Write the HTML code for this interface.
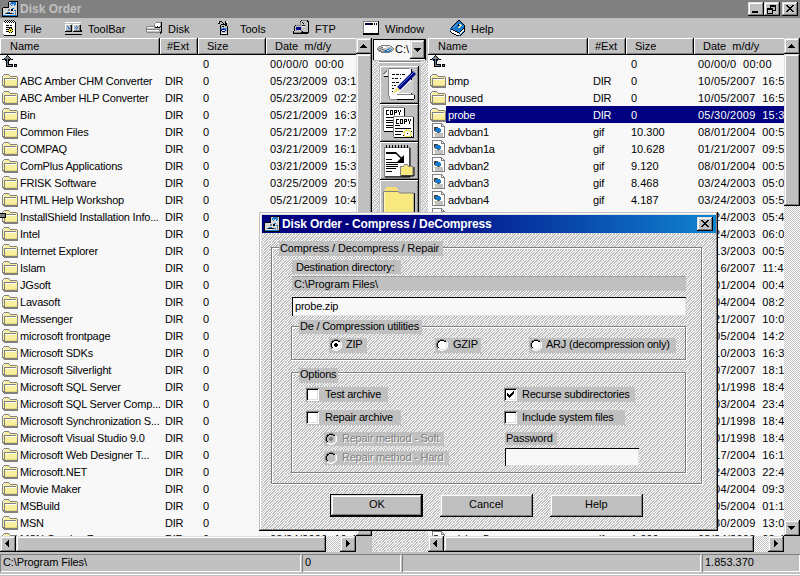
<!DOCTYPE html><html><head><meta charset='utf-8'><style>
*{box-sizing:border-box}
html,body{margin:0;padding:0}
body{width:800px;height:576px;overflow:hidden;position:relative;background:#c0c0c0;font-family:"Liberation Sans",sans-serif;font-size:11px;color:#000}
.a{position:absolute}
.t{position:absolute;white-space:pre;line-height:13px;height:13px}
.rb{box-shadow:inset -1px -1px #000,inset 1px 1px #fff,inset -2px -2px #808080}
.rb2{box-shadow:inset -1px -1px #000,inset 1px 1px #dfdfdf,inset -2px -2px #808080,inset 2px 2px #fff}
.sk{box-shadow:inset 1px 1px #808080,inset -1px -1px #fff}
</style></head><body><svg width="0" height="0" style="position:absolute" shape-rendering="crispEdges"><defs><g id="i-up"><rect x="7" y="0" width="1" height="1" fill="#000000"/><rect x="6" y="1" width="1" height="1" fill="#000000"/><rect x="7" y="1" width="1" height="1" fill="#808080"/><rect x="8" y="1" width="1" height="1" fill="#000000"/><rect x="5" y="2" width="1" height="1" fill="#1878d0"/><rect x="6" y="2" width="3" height="1" fill="#808080"/><rect x="9" y="2" width="1" height="1" fill="#000000"/><rect x="4" y="3" width="1" height="1" fill="#000000"/><rect x="5" y="3" width="5" height="1" fill="#808080"/><rect x="10" y="3" width="1" height="1" fill="#000000"/><rect x="2" y="4" width="2" height="1" fill="#000000"/><rect x="4" y="4" width="1" height="1" fill="#1878d0"/><rect x="5" y="4" width="2" height="1" fill="#000000"/><rect x="7" y="4" width="1" height="1" fill="#808080"/><rect x="8" y="4" width="2" height="1" fill="#000000"/><rect x="10" y="4" width="1" height="1" fill="#1878d0"/><rect x="11" y="4" width="2" height="1" fill="#000000"/><rect x="5" y="5" width="2" height="1" fill="#000000"/><rect x="7" y="5" width="1" height="1" fill="#808080"/><rect x="8" y="5" width="2" height="1" fill="#000000"/><rect x="6" y="6" width="1" height="1" fill="#000000"/><rect x="7" y="6" width="1" height="1" fill="#808080"/><rect x="8" y="6" width="1" height="1" fill="#000000"/><rect x="6" y="7" width="1" height="1" fill="#000000"/><rect x="7" y="7" width="1" height="1" fill="#1878d0"/><rect x="8" y="7" width="1" height="1" fill="#000000"/><rect x="6" y="8" width="1" height="1" fill="#000000"/><rect x="7" y="8" width="1" height="1" fill="#808080"/><rect x="8" y="8" width="1" height="1" fill="#000000"/><rect x="6" y="9" width="1" height="1" fill="#000000"/><rect x="7" y="9" width="1" height="1" fill="#808080"/><rect x="8" y="9" width="5" height="1" fill="#000000"/><rect x="14" y="9" width="3" height="1" fill="#000000"/><rect x="6" y="10" width="1" height="1" fill="#000000"/><rect x="7" y="10" width="4" height="1" fill="#808080"/><rect x="11" y="10" width="1" height="1" fill="#1878d0"/><rect x="12" y="10" width="1" height="1" fill="#000000"/><rect x="14" y="10" width="1" height="1" fill="#000000"/><rect x="15" y="10" width="1" height="1" fill="#808080"/><rect x="16" y="10" width="1" height="1" fill="#000000"/><rect x="6" y="11" width="7" height="1" fill="#000000"/><rect x="14" y="11" width="3" height="1" fill="#000000"/></g><g id="i-dir"><rect x="2" y="0" width="5" height="1" fill="#808080"/><rect x="1" y="1" width="1" height="1" fill="#808080"/><rect x="2" y="1" width="1" height="1" fill="#ffffff"/><rect x="3" y="1" width="4" height="1" fill="#f8f0a0"/><rect x="7" y="1" width="1" height="1" fill="#808080"/><rect x="0" y="2" width="1" height="1" fill="#808080"/><rect x="1" y="2" width="1" height="1" fill="#ffffff"/><rect x="2" y="2" width="6" height="1" fill="#f8f0a0"/><rect x="8" y="2" width="7" height="1" fill="#808080"/><rect x="0" y="3" width="1" height="1" fill="#808080"/><rect x="1" y="3" width="1" height="1" fill="#ffffff"/><rect x="2" y="3" width="13" height="1" fill="#f8f0a0"/><rect x="15" y="3" width="1" height="1" fill="#808080"/><rect x="0" y="4" width="1" height="1" fill="#808080"/><rect x="1" y="4" width="1" height="1" fill="#f8f0a0"/><rect x="2" y="4" width="12" height="1" fill="#808080"/><rect x="14" y="4" width="1" height="1" fill="#f8f0a0"/><rect x="15" y="4" width="1" height="1" fill="#808080"/><rect x="0" y="5" width="1" height="1" fill="#808080"/><rect x="1" y="5" width="1" height="1" fill="#f8f0a0"/><rect x="2" y="5" width="1" height="1" fill="#808080"/><rect x="3" y="5" width="11" height="1" fill="#ffffff"/><rect x="14" y="5" width="1" height="1" fill="#f8f0a0"/><rect x="15" y="5" width="1" height="1" fill="#808080"/><rect x="0" y="6" width="1" height="1" fill="#808080"/><rect x="1" y="6" width="1" height="1" fill="#f8f0a0"/><rect x="2" y="6" width="1" height="1" fill="#808080"/><rect x="3" y="6" width="12" height="1" fill="#f8f0a0"/><rect x="15" y="6" width="1" height="1" fill="#808080"/><rect x="0" y="7" width="1" height="1" fill="#808080"/><rect x="1" y="7" width="1" height="1" fill="#f8f0a0"/><rect x="2" y="7" width="1" height="1" fill="#808080"/><rect x="3" y="7" width="12" height="1" fill="#f8f0a0"/><rect x="15" y="7" width="1" height="1" fill="#808080"/><rect x="0" y="8" width="1" height="1" fill="#808080"/><rect x="1" y="8" width="1" height="1" fill="#f8f0a0"/><rect x="2" y="8" width="1" height="1" fill="#808080"/><rect x="3" y="8" width="12" height="1" fill="#f8f0a0"/><rect x="15" y="8" width="1" height="1" fill="#808080"/><rect x="0" y="9" width="1" height="1" fill="#808080"/><rect x="1" y="9" width="1" height="1" fill="#f8f0a0"/><rect x="2" y="9" width="1" height="1" fill="#808080"/><rect x="3" y="9" width="12" height="1" fill="#f8f0a0"/><rect x="15" y="9" width="1" height="1" fill="#808080"/><rect x="0" y="10" width="1" height="1" fill="#808080"/><rect x="1" y="10" width="1" height="1" fill="#f8f0a0"/><rect x="2" y="10" width="1" height="1" fill="#808080"/><rect x="3" y="10" width="11" height="1" fill="#f8f0a0"/><rect x="14" y="10" width="1" height="1" fill="#e8d878"/><rect x="15" y="10" width="1" height="1" fill="#808080"/><rect x="0" y="11" width="3" height="1" fill="#808080"/><rect x="3" y="11" width="12" height="1" fill="#e8d878"/><rect x="15" y="11" width="1" height="1" fill="#808080"/><rect x="1" y="12" width="15" height="1" fill="#808080"/><rect x="2" y="13" width="14" height="1" fill="#808080"/></g><g id="i-gif"><rect x="0" y="0" width="10" height="1" fill="#808080"/><rect x="0" y="1" width="1" height="1" fill="#808080"/><rect x="1" y="1" width="8" height="1" fill="#ffffff"/><rect x="9" y="1" width="2" height="1" fill="#808080"/><rect x="0" y="2" width="1" height="1" fill="#808080"/><rect x="1" y="2" width="8" height="1" fill="#ffffff"/><rect x="9" y="2" width="1" height="1" fill="#808080"/><rect x="10" y="2" width="1" height="1" fill="#ffffff"/><rect x="11" y="2" width="1" height="1" fill="#808080"/><rect x="0" y="3" width="1" height="1" fill="#808080"/><rect x="1" y="3" width="8" height="1" fill="#ffffff"/><rect x="9" y="3" width="4" height="1" fill="#808080"/><rect x="0" y="4" width="1" height="1" fill="#808080"/><rect x="1" y="4" width="1" height="1" fill="#ffffff"/><rect x="2" y="4" width="4" height="1" fill="#404040"/><rect x="6" y="4" width="6" height="1" fill="#ffffff"/><rect x="12" y="4" width="1" height="1" fill="#808080"/><rect x="0" y="5" width="1" height="1" fill="#808080"/><rect x="1" y="5" width="1" height="1" fill="#ffffff"/><rect x="2" y="5" width="2" height="1" fill="#404040"/><rect x="4" y="5" width="4" height="1" fill="#1878d0"/><rect x="8" y="5" width="4" height="1" fill="#ffffff"/><rect x="12" y="5" width="1" height="1" fill="#808080"/><rect x="0" y="6" width="1" height="1" fill="#808080"/><rect x="1" y="6" width="1" height="1" fill="#ffffff"/><rect x="2" y="6" width="1" height="1" fill="#404040"/><rect x="3" y="6" width="6" height="1" fill="#1878d0"/><rect x="9" y="6" width="3" height="1" fill="#ffffff"/><rect x="12" y="6" width="1" height="1" fill="#808080"/><rect x="0" y="7" width="1" height="1" fill="#808080"/><rect x="1" y="7" width="1" height="1" fill="#ffffff"/><rect x="2" y="7" width="1" height="1" fill="#404040"/><rect x="3" y="7" width="6" height="1" fill="#1878d0"/><rect x="9" y="7" width="3" height="1" fill="#ffffff"/><rect x="12" y="7" width="1" height="1" fill="#808080"/><rect x="0" y="8" width="1" height="1" fill="#808080"/><rect x="1" y="8" width="2" height="1" fill="#ffffff"/><rect x="3" y="8" width="1" height="1" fill="#808080"/><rect x="4" y="8" width="5" height="1" fill="#1878d0"/><rect x="9" y="8" width="3" height="1" fill="#ffffff"/><rect x="12" y="8" width="1" height="1" fill="#808080"/><rect x="0" y="9" width="1" height="1" fill="#808080"/><rect x="1" y="9" width="4" height="1" fill="#ffffff"/><rect x="5" y="9" width="1" height="1" fill="#808080"/><rect x="6" y="9" width="1" height="1" fill="#404040"/><rect x="7" y="9" width="1" height="1" fill="#808080"/><rect x="8" y="9" width="4" height="1" fill="#ffffff"/><rect x="12" y="9" width="1" height="1" fill="#808080"/><rect x="0" y="10" width="1" height="1" fill="#808080"/><rect x="1" y="10" width="1" height="1" fill="#ffffff"/><rect x="2" y="10" width="1" height="1" fill="#e8d878"/><rect x="3" y="10" width="8" height="1" fill="#c0c0c0"/><rect x="11" y="10" width="1" height="1" fill="#ffffff"/><rect x="12" y="10" width="1" height="1" fill="#808080"/><rect x="0" y="11" width="1" height="1" fill="#808080"/><rect x="1" y="11" width="2" height="1" fill="#ffffff"/><rect x="3" y="11" width="8" height="1" fill="#c0c0c0"/><rect x="11" y="11" width="1" height="1" fill="#ffffff"/><rect x="12" y="11" width="1" height="1" fill="#808080"/><rect x="0" y="12" width="1" height="1" fill="#808080"/><rect x="1" y="12" width="2" height="1" fill="#ffffff"/><rect x="3" y="12" width="1" height="1" fill="#c0c0c0"/><rect x="4" y="12" width="1" height="1" fill="#e8d878"/><rect x="5" y="12" width="6" height="1" fill="#c0c0c0"/><rect x="11" y="12" width="1" height="1" fill="#ffffff"/><rect x="12" y="12" width="1" height="1" fill="#808080"/><rect x="0" y="13" width="1" height="1" fill="#808080"/><rect x="1" y="13" width="2" height="1" fill="#ffffff"/><rect x="3" y="13" width="8" height="1" fill="#c0c0c0"/><rect x="11" y="13" width="1" height="1" fill="#ffffff"/><rect x="12" y="13" width="1" height="1" fill="#808080"/><rect x="0" y="14" width="13" height="1" fill="#808080"/></g><pattern id="hD" x="4" y="0" width="8" height="8" patternUnits="userSpaceOnUse"><rect width="8" height="8" fill="#c0c0c0"/><g fill="#fff"><rect x="1" y="0" width="1" height="1"/><rect x="2" y="0" width="1" height="1"/><rect x="4" y="0" width="1" height="1"/><rect x="7" y="0" width="1" height="1"/><rect x="0" y="1" width="1" height="1"/><rect x="3" y="1" width="1" height="1"/><rect x="6" y="1" width="1" height="1"/><rect x="0" y="2" width="1" height="1"/><rect x="3" y="2" width="1" height="1"/><rect x="5" y="2" width="1" height="1"/><rect x="1" y="3" width="1" height="1"/><rect x="2" y="3" width="1" height="1"/><rect x="4" y="3" width="1" height="1"/><rect x="7" y="3" width="1" height="1"/><rect x="0" y="4" width="1" height="1"/><rect x="3" y="4" width="1" height="1"/><rect x="6" y="4" width="1" height="1"/><rect x="2" y="5" width="1" height="1"/><rect x="5" y="5" width="1" height="1"/><rect x="7" y="5" width="1" height="1"/><rect x="1" y="6" width="1" height="1"/><rect x="4" y="6" width="1" height="1"/><rect x="6" y="6" width="1" height="1"/><rect x="0" y="7" width="1" height="1"/><rect x="3" y="7" width="1" height="1"/><rect x="5" y="7" width="1" height="1"/></g></pattern><pattern id="hM" x="2" y="4" width="8" height="8" patternUnits="userSpaceOnUse"><rect width="8" height="8" fill="#c0c0c0"/><g fill="#fff"><rect x="1" y="0" width="1" height="1"/><rect x="2" y="0" width="1" height="1"/><rect x="4" y="0" width="1" height="1"/><rect x="7" y="0" width="1" height="1"/><rect x="0" y="1" width="1" height="1"/><rect x="3" y="1" width="1" height="1"/><rect x="6" y="1" width="1" height="1"/><rect x="0" y="2" width="1" height="1"/><rect x="3" y="2" width="1" height="1"/><rect x="5" y="2" width="1" height="1"/><rect x="1" y="3" width="1" height="1"/><rect x="2" y="3" width="1" height="1"/><rect x="4" y="3" width="1" height="1"/><rect x="7" y="3" width="1" height="1"/><rect x="0" y="4" width="1" height="1"/><rect x="3" y="4" width="1" height="1"/><rect x="6" y="4" width="1" height="1"/><rect x="2" y="5" width="1" height="1"/><rect x="5" y="5" width="1" height="1"/><rect x="7" y="5" width="1" height="1"/><rect x="1" y="6" width="1" height="1"/><rect x="4" y="6" width="1" height="1"/><rect x="6" y="6" width="1" height="1"/><rect x="0" y="7" width="1" height="1"/><rect x="3" y="7" width="1" height="1"/><rect x="5" y="7" width="1" height="1"/></g></pattern><pattern id="ck" x="0" y="0" width="2" height="2" patternUnits="userSpaceOnUse"><rect width="2" height="2" fill="#c0c0c0"/><rect x="1" y="0" width="1" height="1" fill="#fff"/><rect x="0" y="1" width="1" height="1" fill="#fff"/></pattern></defs></svg>
<div class="a" style="left:0;top:0;width:800px;height:18px;background:#808080"></div>
<svg class="a" style="left:2px;top:1px;" width="16" height="16" shape-rendering="crispEdges"><rect x="7" y="0" width="9" height="1" fill="#000000"/><rect x="6" y="1" width="1" height="1" fill="#000000"/><rect x="7" y="1" width="2" height="1" fill="#d8d8d8"/><rect x="9" y="1" width="5" height="1" fill="#1878d0"/><rect x="14" y="1" width="1" height="1" fill="#d8d8d8"/><rect x="15" y="1" width="1" height="1" fill="#000000"/><rect x="6" y="2" width="1" height="1" fill="#000000"/><rect x="7" y="2" width="1" height="1" fill="#d8d8d8"/><rect x="8" y="2" width="6" height="1" fill="#1878d0"/><rect x="14" y="2" width="1" height="1" fill="#d8d8d8"/><rect x="15" y="2" width="1" height="1" fill="#000000"/><rect x="6" y="3" width="1" height="1" fill="#000000"/><rect x="7" y="3" width="1" height="1" fill="#d8d8d8"/><rect x="8" y="3" width="1" height="1" fill="#1878d0"/><rect x="9" y="3" width="1" height="1" fill="#d8d8d8"/><rect x="10" y="3" width="1" height="1" fill="#1878d0"/><rect x="11" y="3" width="1" height="1" fill="#d8d8d8"/><rect x="12" y="3" width="2" height="1" fill="#1878d0"/><rect x="14" y="3" width="1" height="1" fill="#d8d8d8"/><rect x="15" y="3" width="1" height="1" fill="#000000"/><rect x="6" y="4" width="1" height="1" fill="#000000"/><rect x="7" y="4" width="2" height="1" fill="#d8d8d8"/><rect x="9" y="4" width="1" height="1" fill="#1878d0"/><rect x="10" y="4" width="2" height="1" fill="#d8d8d8"/><rect x="12" y="4" width="1" height="1" fill="#1878d0"/><rect x="13" y="4" width="2" height="1" fill="#d8d8d8"/><rect x="15" y="4" width="1" height="1" fill="#000000"/><rect x="6" y="5" width="1" height="1" fill="#000000"/><rect x="7" y="5" width="8" height="1" fill="#d8d8d8"/><rect x="15" y="5" width="1" height="1" fill="#000000"/><rect x="1" y="6" width="6" height="1" fill="#000000"/><rect x="7" y="6" width="8" height="1" fill="#d8d8d8"/><rect x="15" y="6" width="1" height="1" fill="#000000"/><rect x="0" y="7" width="1" height="1" fill="#000000"/><rect x="1" y="7" width="9" height="1" fill="#d8d8d8"/><rect x="10" y="7" width="2" height="1" fill="#1878d0"/><rect x="12" y="7" width="3" height="1" fill="#d8d8d8"/><rect x="15" y="7" width="1" height="1" fill="#000000"/><rect x="0" y="8" width="1" height="1" fill="#000000"/><rect x="1" y="8" width="5" height="1" fill="#d8d8d8"/><rect x="6" y="8" width="2" height="1" fill="#808080"/><rect x="8" y="8" width="1" height="1" fill="#d8d8d8"/><rect x="9" y="8" width="2" height="1" fill="#000000"/><rect x="11" y="8" width="4" height="1" fill="#d8d8d8"/><rect x="15" y="8" width="1" height="1" fill="#000000"/><rect x="0" y="9" width="1" height="1" fill="#000000"/><rect x="1" y="9" width="5" height="1" fill="#d8d8d8"/><rect x="6" y="9" width="2" height="1" fill="#808080"/><rect x="8" y="9" width="1" height="1" fill="#d8d8d8"/><rect x="9" y="9" width="2" height="1" fill="#000000"/><rect x="11" y="9" width="1" height="1" fill="#d8d8d8"/><rect x="12" y="9" width="2" height="1" fill="#1878d0"/><rect x="14" y="9" width="1" height="1" fill="#d8d8d8"/><rect x="15" y="9" width="1" height="1" fill="#000000"/><rect x="0" y="10" width="1" height="1" fill="#000000"/><rect x="1" y="10" width="12" height="1" fill="#d8d8d8"/><rect x="13" y="10" width="1" height="1" fill="#808080"/><rect x="14" y="10" width="1" height="1" fill="#d8d8d8"/><rect x="15" y="10" width="1" height="1" fill="#000000"/><rect x="0" y="11" width="1" height="1" fill="#000000"/><rect x="1" y="11" width="4" height="1" fill="#d8d8d8"/><rect x="5" y="11" width="3" height="1" fill="#1878d0"/><rect x="8" y="11" width="5" height="1" fill="#d8d8d8"/><rect x="13" y="11" width="1" height="1" fill="#808080"/><rect x="14" y="11" width="1" height="1" fill="#d8d8d8"/><rect x="15" y="11" width="1" height="1" fill="#000000"/><rect x="0" y="12" width="1" height="1" fill="#000000"/><rect x="1" y="12" width="2" height="1" fill="#d8d8d8"/><rect x="3" y="12" width="1" height="1" fill="#1878d0"/><rect x="4" y="12" width="6" height="1" fill="#000000"/><rect x="10" y="12" width="2" height="1" fill="#1878d0"/><rect x="12" y="12" width="1" height="1" fill="#d8d8d8"/><rect x="13" y="12" width="1" height="1" fill="#808080"/><rect x="14" y="12" width="1" height="1" fill="#d8d8d8"/><rect x="15" y="12" width="1" height="1" fill="#000000"/><rect x="0" y="13" width="1" height="1" fill="#000000"/><rect x="1" y="13" width="3" height="1" fill="#d8d8d8"/><rect x="4" y="13" width="4" height="1" fill="#ffffff"/><rect x="8" y="13" width="5" height="1" fill="#d8d8d8"/><rect x="13" y="13" width="1" height="1" fill="#808080"/><rect x="14" y="13" width="1" height="1" fill="#d8d8d8"/><rect x="15" y="13" width="1" height="1" fill="#000000"/><rect x="0" y="14" width="1" height="1" fill="#000000"/><rect x="1" y="14" width="14" height="1" fill="#1878d0"/><rect x="15" y="14" width="1" height="1" fill="#000000"/><rect x="0" y="15" width="16" height="1" fill="#000000"/></svg>
<div class="t" style="left:20px;top:2px;font-weight:bold;font-size:12px;line-height:15px;height:15px;color:#c0c0c0">Disk Order</div>
<div class="a rb2" style="left:748px;top:2px;width:16px;height:14px;background:#c0c0c0;"></div>
<div class="a rb2" style="left:764px;top:2px;width:16px;height:14px;background:#c0c0c0;"></div>
<div class="a rb2" style="left:782px;top:2px;width:16px;height:14px;background:#c0c0c0;"></div>
<div class="a" style="left:752px;top:11px;width:6px;height:2px;background:#000"></div>
<svg class="a" style="left:764px;top:2px" width="16" height="14" shape-rendering="crispEdges"><g fill="#000"><rect x="6" y="3" width="6" height="2"/><rect x="6" y="3" width="1" height="3"/><rect x="11" y="3" width="1" height="6"/><rect x="9" y="8" width="3" height="1"/><rect x="3" y="6" width="6" height="2"/><rect x="3" y="6" width="1" height="6"/><rect x="8" y="6" width="1" height="6"/><rect x="3" y="11" width="6" height="1"/></g></svg>
<svg class="a" style="left:782px;top:2px" width="16" height="14" shape-rendering="crispEdges"><path d="M4 3h2v1h1v1h2v-1h1v-1h2v1h-1v1h-1v1h-1v1h1v1h1v1h1v1h-2v-1h-1v-1h-2v1h-1v1h-2v-1h1v-1h1v-1h1v-1h-1v-1h-1v-1h-1z" fill="#000"/></svg>
<div class="t" style="left:24px;top:23px;">File</div>
<div class="t" style="left:88px;top:23px;">ToolBar</div>
<div class="t" style="left:168px;top:23px;">Disk</div>
<div class="t" style="left:240px;top:23px;">Tools</div>
<div class="t" style="left:315px;top:23px;">FTP</div>
<div class="t" style="left:385px;top:23px;">Window</div>
<div class="t" style="left:471px;top:23px;">Help</div>
<svg class="a" style="left:3px;top:20px;" width="14" height="16" shape-rendering="crispEdges"><rect x="2" y="0" width="1" height="1" fill="#000000"/><rect x="4" y="0" width="1" height="1" fill="#000000"/><rect x="6" y="0" width="1" height="1" fill="#000000"/><rect x="8" y="0" width="1" height="1" fill="#000000"/><rect x="10" y="0" width="1" height="1" fill="#000000"/><rect x="1" y="1" width="1" height="1" fill="#000000"/><rect x="2" y="1" width="1" height="1" fill="#ffffff"/><rect x="3" y="1" width="1" height="1" fill="#000000"/><rect x="4" y="1" width="1" height="1" fill="#ffffff"/><rect x="5" y="1" width="1" height="1" fill="#000000"/><rect x="6" y="1" width="1" height="1" fill="#ffffff"/><rect x="7" y="1" width="1" height="1" fill="#000000"/><rect x="8" y="1" width="1" height="1" fill="#ffffff"/><rect x="9" y="1" width="1" height="1" fill="#000000"/><rect x="10" y="1" width="1" height="1" fill="#ffffff"/><rect x="11" y="1" width="1" height="1" fill="#000000"/><rect x="0" y="2" width="2" height="1" fill="#ffffff"/><rect x="2" y="2" width="1" height="1" fill="#000000"/><rect x="3" y="2" width="1" height="1" fill="#ffffff"/><rect x="4" y="2" width="1" height="1" fill="#000000"/><rect x="5" y="2" width="1" height="1" fill="#ffffff"/><rect x="6" y="2" width="1" height="1" fill="#000000"/><rect x="7" y="2" width="1" height="1" fill="#ffffff"/><rect x="8" y="2" width="1" height="1" fill="#000000"/><rect x="9" y="2" width="1" height="1" fill="#ffffff"/><rect x="10" y="2" width="1" height="1" fill="#000000"/><rect x="11" y="2" width="1" height="1" fill="#ffffff"/><rect x="12" y="2" width="1" height="1" fill="#000000"/><rect x="0" y="3" width="12" height="1" fill="#ffffff"/><rect x="12" y="3" width="1" height="1" fill="#000000"/><rect x="0" y="4" width="12" height="1" fill="#ffffff"/><rect x="12" y="4" width="1" height="1" fill="#000000"/><rect x="0" y="5" width="3" height="1" fill="#ffffff"/><rect x="3" y="5" width="3" height="1" fill="#000000"/><rect x="6" y="5" width="1" height="1" fill="#ffffff"/><rect x="7" y="5" width="2" height="1" fill="#000000"/><rect x="9" y="5" width="3" height="1" fill="#ffffff"/><rect x="12" y="5" width="1" height="1" fill="#000000"/><rect x="0" y="6" width="12" height="1" fill="#ffffff"/><rect x="12" y="6" width="1" height="1" fill="#000000"/><rect x="0" y="7" width="3" height="1" fill="#ffffff"/><rect x="3" y="7" width="6" height="1" fill="#000000"/><rect x="9" y="7" width="3" height="1" fill="#ffffff"/><rect x="12" y="7" width="1" height="1" fill="#000000"/><rect x="0" y="8" width="6" height="1" fill="#ffffff"/><rect x="6" y="8" width="1" height="1" fill="#000000"/><rect x="7" y="8" width="1" height="1" fill="#f0e040"/><rect x="8" y="8" width="1" height="1" fill="#000000"/><rect x="9" y="8" width="3" height="1" fill="#ffffff"/><rect x="12" y="8" width="1" height="1" fill="#000000"/><rect x="0" y="9" width="3" height="1" fill="#ffffff"/><rect x="3" y="9" width="3" height="1" fill="#000000"/><rect x="6" y="9" width="3" height="1" fill="#f0e040"/><rect x="9" y="9" width="1" height="1" fill="#000000"/><rect x="10" y="9" width="2" height="1" fill="#ffffff"/><rect x="12" y="9" width="1" height="1" fill="#000000"/><rect x="0" y="10" width="5" height="1" fill="#ffffff"/><rect x="5" y="10" width="2" height="1" fill="#f0e040"/><rect x="7" y="10" width="1" height="1" fill="#000000"/><rect x="8" y="10" width="2" height="1" fill="#f0e040"/><rect x="10" y="10" width="2" height="1" fill="#ffffff"/><rect x="12" y="10" width="1" height="1" fill="#000000"/><rect x="0" y="11" width="3" height="1" fill="#ffffff"/><rect x="3" y="11" width="3" height="1" fill="#000000"/><rect x="6" y="11" width="3" height="1" fill="#f0e040"/><rect x="9" y="11" width="1" height="1" fill="#000000"/><rect x="10" y="11" width="2" height="1" fill="#ffffff"/><rect x="12" y="11" width="1" height="1" fill="#000000"/><rect x="0" y="12" width="6" height="1" fill="#ffffff"/><rect x="6" y="12" width="1" height="1" fill="#000000"/><rect x="7" y="12" width="1" height="1" fill="#f0e040"/><rect x="8" y="12" width="1" height="1" fill="#000000"/><rect x="9" y="12" width="3" height="1" fill="#ffffff"/><rect x="12" y="12" width="1" height="1" fill="#000000"/><rect x="0" y="13" width="12" height="1" fill="#ffffff"/><rect x="12" y="13" width="1" height="1" fill="#000000"/><rect x="0" y="14" width="1" height="1" fill="#808080"/><rect x="1" y="14" width="11" height="1" fill="#ffffff"/><rect x="12" y="14" width="1" height="1" fill="#000000"/><rect x="1" y="15" width="12" height="1" fill="#000000"/></svg>
<svg class="a" style="left:65px;top:22px;" width="17" height="13" shape-rendering="crispEdges"><rect x="0" y="0" width="16" height="1" fill="#ffffff"/><rect x="0" y="2" width="6" height="1" fill="#ffffff"/><rect x="6" y="2" width="1" height="1" fill="#c0c0c0"/><rect x="8" y="2" width="7" height="1" fill="#ffffff"/><rect x="15" y="2" width="1" height="1" fill="#c0c0c0"/><rect x="0" y="3" width="1" height="1" fill="#ffffff"/><rect x="1" y="3" width="4" height="1" fill="#c0c0c0"/><rect x="5" y="3" width="1" height="1" fill="#808080"/><rect x="6" y="3" width="1" height="1" fill="#000000"/><rect x="8" y="3" width="1" height="1" fill="#ffffff"/><rect x="9" y="3" width="5" height="1" fill="#c0c0c0"/><rect x="14" y="3" width="1" height="1" fill="#808080"/><rect x="15" y="3" width="1" height="1" fill="#000000"/><rect x="0" y="4" width="1" height="1" fill="#ffffff"/><rect x="1" y="4" width="1" height="1" fill="#c0c0c0"/><rect x="2" y="4" width="1" height="1" fill="#1878d0"/><rect x="3" y="4" width="2" height="1" fill="#c0c0c0"/><rect x="5" y="4" width="1" height="1" fill="#808080"/><rect x="6" y="4" width="1" height="1" fill="#000000"/><rect x="8" y="4" width="1" height="1" fill="#ffffff"/><rect x="9" y="4" width="2" height="1" fill="#c0c0c0"/><rect x="11" y="4" width="1" height="1" fill="#1878d0"/><rect x="12" y="4" width="2" height="1" fill="#c0c0c0"/><rect x="14" y="4" width="1" height="1" fill="#808080"/><rect x="15" y="4" width="1" height="1" fill="#000000"/><rect x="0" y="5" width="1" height="1" fill="#ffffff"/><rect x="1" y="5" width="2" height="1" fill="#c0c0c0"/><rect x="3" y="5" width="1" height="1" fill="#1878d0"/><rect x="4" y="5" width="1" height="1" fill="#c0c0c0"/><rect x="5" y="5" width="1" height="1" fill="#808080"/><rect x="6" y="5" width="1" height="1" fill="#000000"/><rect x="8" y="5" width="1" height="1" fill="#ffffff"/><rect x="9" y="5" width="1" height="1" fill="#c0c0c0"/><rect x="10" y="5" width="1" height="1" fill="#1878d0"/><rect x="11" y="5" width="1" height="1" fill="#c0c0c0"/><rect x="12" y="5" width="1" height="1" fill="#1878d0"/><rect x="13" y="5" width="1" height="1" fill="#c0c0c0"/><rect x="14" y="5" width="1" height="1" fill="#808080"/><rect x="15" y="5" width="1" height="1" fill="#000000"/><rect x="0" y="6" width="1" height="1" fill="#ffffff"/><rect x="1" y="6" width="2" height="1" fill="#c0c0c0"/><rect x="3" y="6" width="2" height="1" fill="#1878d0"/><rect x="5" y="6" width="1" height="1" fill="#808080"/><rect x="6" y="6" width="1" height="1" fill="#000000"/><rect x="8" y="6" width="1" height="1" fill="#ffffff"/><rect x="9" y="6" width="2" height="1" fill="#c0c0c0"/><rect x="11" y="6" width="1" height="1" fill="#1878d0"/><rect x="12" y="6" width="2" height="1" fill="#c0c0c0"/><rect x="14" y="6" width="1" height="1" fill="#808080"/><rect x="15" y="6" width="1" height="1" fill="#000000"/><rect x="0" y="7" width="1" height="1" fill="#ffffff"/><rect x="1" y="7" width="4" height="1" fill="#c0c0c0"/><rect x="5" y="7" width="1" height="1" fill="#808080"/><rect x="6" y="7" width="1" height="1" fill="#000000"/><rect x="8" y="7" width="1" height="1" fill="#ffffff"/><rect x="9" y="7" width="5" height="1" fill="#c0c0c0"/><rect x="14" y="7" width="1" height="1" fill="#808080"/><rect x="15" y="7" width="1" height="1" fill="#000000"/><rect x="0" y="8" width="1" height="1" fill="#ffffff"/><rect x="1" y="8" width="5" height="1" fill="#808080"/><rect x="6" y="8" width="1" height="1" fill="#000000"/><rect x="8" y="8" width="1" height="1" fill="#ffffff"/><rect x="9" y="8" width="6" height="1" fill="#808080"/><rect x="15" y="8" width="2" height="1" fill="#000000"/><rect x="0" y="9" width="7" height="1" fill="#000000"/><rect x="8" y="9" width="9" height="1" fill="#000000"/><rect x="0" y="12" width="17" height="1" fill="#000000"/></svg>
<svg class="a" style="left:146px;top:22px;" width="17" height="12" shape-rendering="crispEdges"><rect x="8" y="0" width="1" height="1" fill="#ffffff"/><rect x="9" y="0" width="6" height="1" fill="#808080"/><rect x="15" y="0" width="1" height="1" fill="#000000"/><rect x="8" y="1" width="1" height="1" fill="#808080"/><rect x="9" y="1" width="5" height="1" fill="#ffffff"/><rect x="14" y="1" width="1" height="1" fill="#c0c0c0"/><rect x="15" y="1" width="1" height="1" fill="#000000"/><rect x="8" y="2" width="1" height="1" fill="#808080"/><rect x="9" y="2" width="5" height="1" fill="#ffffff"/><rect x="14" y="2" width="1" height="1" fill="#c0c0c0"/><rect x="15" y="2" width="1" height="1" fill="#000000"/><rect x="8" y="3" width="1" height="1" fill="#808080"/><rect x="9" y="3" width="5" height="1" fill="#ffffff"/><rect x="14" y="3" width="1" height="1" fill="#c0c0c0"/><rect x="15" y="3" width="1" height="1" fill="#000000"/><rect x="1" y="4" width="8" height="1" fill="#808080"/><rect x="9" y="4" width="1" height="1" fill="#c0c0c0"/><rect x="10" y="4" width="1" height="1" fill="#ffffff"/><rect x="11" y="4" width="1" height="1" fill="#000000"/><rect x="12" y="4" width="1" height="1" fill="#ffffff"/><rect x="13" y="4" width="1" height="1" fill="#c0c0c0"/><rect x="14" y="4" width="2" height="1" fill="#000000"/><rect x="0" y="5" width="1" height="1" fill="#808080"/><rect x="1" y="5" width="7" height="1" fill="#ffffff"/><rect x="8" y="5" width="1" height="1" fill="#808080"/><rect x="9" y="5" width="5" height="1" fill="#000000"/><rect x="14" y="5" width="1" height="1" fill="#c0c0c0"/><rect x="15" y="5" width="1" height="1" fill="#000000"/><rect x="0" y="6" width="1" height="1" fill="#808080"/><rect x="1" y="6" width="14" height="1" fill="#c0c0c0"/><rect x="15" y="6" width="1" height="1" fill="#000000"/><rect x="0" y="7" width="14" height="1" fill="#808080"/><rect x="14" y="7" width="1" height="1" fill="#c0c0c0"/><rect x="15" y="7" width="1" height="1" fill="#000000"/><rect x="0" y="8" width="1" height="1" fill="#808080"/><rect x="1" y="8" width="12" height="1" fill="#ffffff"/><rect x="13" y="8" width="1" height="1" fill="#808080"/><rect x="14" y="8" width="1" height="1" fill="#c0c0c0"/><rect x="15" y="8" width="1" height="1" fill="#000000"/><rect x="0" y="9" width="1" height="1" fill="#808080"/><rect x="1" y="9" width="13" height="1" fill="#c0c0c0"/><rect x="14" y="9" width="1" height="1" fill="#808080"/><rect x="15" y="9" width="1" height="1" fill="#000000"/><rect x="1" y="10" width="13" height="1" fill="#808080"/><rect x="14" y="10" width="2" height="1" fill="#000000"/><rect x="14" y="11" width="1" height="1" fill="#000000"/></svg>
<svg class="a" style="left:217px;top:21px;" width="13" height="14" shape-rendering="crispEdges"><rect x="1" y="0" width="1" height="1" fill="#ffffff"/><rect x="2" y="0" width="3" height="1" fill="#000000"/><rect x="8" y="0" width="1" height="1" fill="#000000"/><rect x="10" y="0" width="1" height="1" fill="#ffffff"/><rect x="2" y="1" width="1" height="1" fill="#000000"/><rect x="5" y="1" width="1" height="1" fill="#000000"/><rect x="8" y="1" width="1" height="1" fill="#000000"/><rect x="10" y="1" width="1" height="1" fill="#ffffff"/><rect x="1" y="2" width="2" height="1" fill="#000000"/><rect x="6" y="2" width="1" height="1" fill="#000000"/><rect x="8" y="2" width="2" height="1" fill="#000000"/><rect x="4" y="3" width="6" height="1" fill="#000000"/><rect x="3" y="4" width="1" height="1" fill="#000000"/><rect x="4" y="4" width="4" height="1" fill="#c0c0c0"/><rect x="8" y="4" width="2" height="1" fill="#000000"/><rect x="3" y="5" width="1" height="1" fill="#000000"/><rect x="4" y="5" width="1" height="1" fill="#c0c0c0"/><rect x="5" y="5" width="2" height="1" fill="#000000"/><rect x="7" y="5" width="3" height="1" fill="#c0c0c0"/><rect x="10" y="5" width="1" height="1" fill="#000000"/><rect x="3" y="6" width="1" height="1" fill="#000000"/><rect x="4" y="6" width="6" height="1" fill="#c0c0c0"/><rect x="10" y="6" width="1" height="1" fill="#000000"/><rect x="3" y="7" width="1" height="1" fill="#000000"/><rect x="4" y="7" width="1" height="1" fill="#1878d0"/><rect x="5" y="7" width="1" height="1" fill="#60a0e0"/><rect x="6" y="7" width="1" height="1" fill="#1878d0"/><rect x="7" y="7" width="1" height="1" fill="#60a0e0"/><rect x="8" y="7" width="1" height="1" fill="#1878d0"/><rect x="9" y="7" width="1" height="1" fill="#60a0e0"/><rect x="10" y="7" width="1" height="1" fill="#000000"/><rect x="3" y="8" width="1" height="1" fill="#000000"/><rect x="4" y="8" width="1" height="1" fill="#1878d0"/><rect x="5" y="8" width="3" height="1" fill="#000080"/><rect x="8" y="8" width="1" height="1" fill="#1878d0"/><rect x="9" y="8" width="1" height="1" fill="#c0c0c0"/><rect x="10" y="8" width="1" height="1" fill="#000000"/><rect x="3" y="9" width="1" height="1" fill="#000000"/><rect x="4" y="9" width="1" height="1" fill="#000080"/><rect x="5" y="9" width="3" height="1" fill="#ffffff"/><rect x="8" y="9" width="1" height="1" fill="#000080"/><rect x="9" y="9" width="1" height="1" fill="#c0c0c0"/><rect x="10" y="9" width="1" height="1" fill="#000000"/><rect x="3" y="10" width="1" height="1" fill="#000000"/><rect x="4" y="10" width="1" height="1" fill="#c0c0c0"/><rect x="5" y="10" width="3" height="1" fill="#000080"/><rect x="8" y="10" width="2" height="1" fill="#c0c0c0"/><rect x="10" y="10" width="1" height="1" fill="#000000"/><rect x="3" y="11" width="1" height="1" fill="#000000"/><rect x="4" y="11" width="6" height="1" fill="#c0c0c0"/><rect x="10" y="11" width="1" height="1" fill="#000000"/><rect x="3" y="12" width="1" height="1" fill="#000000"/><rect x="4" y="12" width="6" height="1" fill="#ffffff"/><rect x="10" y="12" width="1" height="1" fill="#000000"/><rect x="3" y="13" width="8" height="1" fill="#000000"/></svg>
<svg class="a" style="left:293px;top:20px;" width="16" height="14" shape-rendering="crispEdges"><rect x="8" y="0" width="1" height="1" fill="#000000"/><rect x="9" y="0" width="5" height="1" fill="#808080"/><rect x="14" y="0" width="1" height="1" fill="#000000"/><rect x="7" y="1" width="1" height="1" fill="#000000"/><rect x="8" y="1" width="6" height="1" fill="#c0c0c0"/><rect x="14" y="1" width="2" height="1" fill="#000000"/><rect x="7" y="2" width="1" height="1" fill="#808080"/><rect x="8" y="2" width="1" height="1" fill="#c0c0c0"/><rect x="9" y="2" width="1" height="1" fill="#000000"/><rect x="10" y="2" width="5" height="1" fill="#c0c0c0"/><rect x="15" y="2" width="1" height="1" fill="#000000"/><rect x="7" y="3" width="1" height="1" fill="#808080"/><rect x="8" y="3" width="2" height="1" fill="#c0c0c0"/><rect x="10" y="3" width="1" height="1" fill="#000000"/><rect x="11" y="3" width="4" height="1" fill="#c0c0c0"/><rect x="15" y="3" width="1" height="1" fill="#000000"/><rect x="7" y="4" width="1" height="1" fill="#808080"/><rect x="8" y="4" width="7" height="1" fill="#c0c0c0"/><rect x="15" y="4" width="1" height="1" fill="#000000"/><rect x="2" y="5" width="1" height="1" fill="#000000"/><rect x="3" y="5" width="5" height="1" fill="#808080"/><rect x="8" y="5" width="1" height="1" fill="#c0c0c0"/><rect x="9" y="5" width="3" height="1" fill="#000000"/><rect x="12" y="5" width="3" height="1" fill="#c0c0c0"/><rect x="15" y="5" width="1" height="1" fill="#000000"/><rect x="1" y="6" width="1" height="1" fill="#000000"/><rect x="2" y="6" width="7" height="1" fill="#c0c0c0"/><rect x="9" y="6" width="3" height="1" fill="#ffffff"/><rect x="12" y="6" width="3" height="1" fill="#c0c0c0"/><rect x="15" y="6" width="1" height="1" fill="#000000"/><rect x="1" y="7" width="1" height="1" fill="#000000"/><rect x="2" y="7" width="1" height="1" fill="#c0c0c0"/><rect x="3" y="7" width="5" height="1" fill="#000080"/><rect x="8" y="7" width="7" height="1" fill="#c0c0c0"/><rect x="15" y="7" width="1" height="1" fill="#000000"/><rect x="1" y="8" width="1" height="1" fill="#000000"/><rect x="2" y="8" width="1" height="1" fill="#c0c0c0"/><rect x="3" y="8" width="5" height="1" fill="#000080"/><rect x="8" y="8" width="7" height="1" fill="#c0c0c0"/><rect x="15" y="8" width="1" height="1" fill="#000000"/><rect x="1" y="9" width="1" height="1" fill="#000000"/><rect x="2" y="9" width="1" height="1" fill="#c0c0c0"/><rect x="3" y="9" width="5" height="1" fill="#000080"/><rect x="8" y="9" width="7" height="1" fill="#c0c0c0"/><rect x="15" y="9" width="1" height="1" fill="#000000"/><rect x="1" y="10" width="1" height="1" fill="#000000"/><rect x="2" y="10" width="6" height="1" fill="#c0c0c0"/><rect x="8" y="10" width="1" height="1" fill="#808080"/><rect x="9" y="10" width="6" height="1" fill="#c0c0c0"/><rect x="15" y="10" width="1" height="1" fill="#000000"/><rect x="0" y="11" width="1" height="1" fill="#000000"/><rect x="1" y="11" width="7" height="1" fill="#c0c0c0"/><rect x="8" y="11" width="1" height="1" fill="#808080"/><rect x="9" y="11" width="1" height="1" fill="#000000"/><rect x="10" y="11" width="5" height="1" fill="#c0c0c0"/><rect x="15" y="11" width="1" height="1" fill="#000000"/><rect x="0" y="12" width="1" height="1" fill="#000000"/><rect x="1" y="12" width="7" height="1" fill="#808080"/><rect x="8" y="12" width="8" height="1" fill="#000000"/><rect x="0" y="13" width="15" height="1" fill="#000000"/></svg>
<svg class="a" style="left:363px;top:21px;" width="16" height="14" shape-rendering="crispEdges"><rect x="0" y="0" width="15" height="1" fill="#808080"/><rect x="15" y="0" width="1" height="1" fill="#000000"/><rect x="0" y="1" width="1" height="1" fill="#808080"/><rect x="1" y="1" width="14" height="1" fill="#ffffff"/><rect x="15" y="1" width="1" height="1" fill="#000000"/><rect x="0" y="2" width="1" height="1" fill="#808080"/><rect x="1" y="2" width="1" height="1" fill="#ffffff"/><rect x="2" y="2" width="2" height="1" fill="#000000"/><rect x="4" y="2" width="3" height="1" fill="#000080"/><rect x="7" y="2" width="3" height="1" fill="#000000"/><rect x="10" y="2" width="1" height="1" fill="#ffffff"/><rect x="11" y="2" width="1" height="1" fill="#000000"/><rect x="12" y="2" width="1" height="1" fill="#ffffff"/><rect x="13" y="2" width="1" height="1" fill="#000000"/><rect x="14" y="2" width="1" height="1" fill="#ffffff"/><rect x="15" y="2" width="1" height="1" fill="#000000"/><rect x="0" y="3" width="1" height="1" fill="#808080"/><rect x="1" y="3" width="1" height="1" fill="#ffffff"/><rect x="2" y="3" width="2" height="1" fill="#000000"/><rect x="4" y="3" width="3" height="1" fill="#000080"/><rect x="7" y="3" width="3" height="1" fill="#000000"/><rect x="10" y="3" width="1" height="1" fill="#ffffff"/><rect x="11" y="3" width="1" height="1" fill="#000000"/><rect x="12" y="3" width="1" height="1" fill="#ffffff"/><rect x="13" y="3" width="1" height="1" fill="#000000"/><rect x="14" y="3" width="1" height="1" fill="#ffffff"/><rect x="15" y="3" width="1" height="1" fill="#000000"/><rect x="0" y="4" width="1" height="1" fill="#808080"/><rect x="1" y="4" width="14" height="1" fill="#ffffff"/><rect x="15" y="4" width="1" height="1" fill="#000000"/><rect x="0" y="5" width="1" height="1" fill="#808080"/><rect x="1" y="5" width="14" height="1" fill="#ffffff"/><rect x="15" y="5" width="1" height="1" fill="#000000"/><rect x="0" y="6" width="1" height="1" fill="#808080"/><rect x="1" y="6" width="14" height="1" fill="#ffffff"/><rect x="15" y="6" width="1" height="1" fill="#000000"/><rect x="0" y="7" width="1" height="1" fill="#808080"/><rect x="1" y="7" width="14" height="1" fill="#ffffff"/><rect x="15" y="7" width="1" height="1" fill="#000000"/><rect x="0" y="8" width="1" height="1" fill="#808080"/><rect x="1" y="8" width="14" height="1" fill="#ffffff"/><rect x="15" y="8" width="1" height="1" fill="#000000"/><rect x="0" y="9" width="1" height="1" fill="#808080"/><rect x="1" y="9" width="14" height="1" fill="#ffffff"/><rect x="15" y="9" width="1" height="1" fill="#000000"/><rect x="0" y="10" width="1" height="1" fill="#808080"/><rect x="1" y="10" width="14" height="1" fill="#ffffff"/><rect x="15" y="10" width="1" height="1" fill="#000000"/><rect x="0" y="11" width="1" height="1" fill="#808080"/><rect x="1" y="11" width="14" height="1" fill="#ffffff"/><rect x="15" y="11" width="1" height="1" fill="#000000"/><rect x="0" y="12" width="16" height="1" fill="#000000"/><rect x="0" y="13" width="16" height="1" fill="#000000"/></svg>
<svg class="a" style="left:450px;top:20px;" width="16" height="16" shape-rendering="crispEdges"><rect x="8" y="0" width="2" height="1" fill="#000000"/><rect x="7" y="1" width="1" height="1" fill="#000000"/><rect x="8" y="1" width="2" height="1" fill="#1878d0"/><rect x="10" y="1" width="1" height="1" fill="#000000"/><rect x="6" y="2" width="1" height="1" fill="#000000"/><rect x="7" y="2" width="4" height="1" fill="#1878d0"/><rect x="11" y="2" width="1" height="1" fill="#000000"/><rect x="5" y="3" width="1" height="1" fill="#000000"/><rect x="6" y="3" width="6" height="1" fill="#1878d0"/><rect x="12" y="3" width="1" height="1" fill="#000000"/><rect x="4" y="4" width="1" height="1" fill="#000000"/><rect x="5" y="4" width="1" height="1" fill="#1878d0"/><rect x="6" y="4" width="1" height="1" fill="#60a0e0"/><rect x="7" y="4" width="1" height="1" fill="#1878d0"/><rect x="8" y="4" width="1" height="1" fill="#000000"/><rect x="9" y="4" width="2" height="1" fill="#f8f0a0"/><rect x="11" y="4" width="2" height="1" fill="#1878d0"/><rect x="13" y="4" width="1" height="1" fill="#000000"/><rect x="3" y="5" width="1" height="1" fill="#000000"/><rect x="4" y="5" width="1" height="1" fill="#1878d0"/><rect x="5" y="5" width="1" height="1" fill="#60a0e0"/><rect x="6" y="5" width="2" height="1" fill="#1878d0"/><rect x="8" y="5" width="1" height="1" fill="#000000"/><rect x="9" y="5" width="1" height="1" fill="#1878d0"/><rect x="10" y="5" width="2" height="1" fill="#f8f0a0"/><rect x="12" y="5" width="2" height="1" fill="#1878d0"/><rect x="14" y="5" width="1" height="1" fill="#000000"/><rect x="2" y="6" width="1" height="1" fill="#000000"/><rect x="3" y="6" width="1" height="1" fill="#1878d0"/><rect x="4" y="6" width="1" height="1" fill="#60a0e0"/><rect x="5" y="6" width="4" height="1" fill="#1878d0"/><rect x="9" y="6" width="2" height="1" fill="#f8f0a0"/><rect x="11" y="6" width="3" height="1" fill="#1878d0"/><rect x="14" y="6" width="1" height="1" fill="#000000"/><rect x="1" y="7" width="1" height="1" fill="#000000"/><rect x="2" y="7" width="1" height="1" fill="#1878d0"/><rect x="3" y="7" width="1" height="1" fill="#60a0e0"/><rect x="4" y="7" width="4" height="1" fill="#1878d0"/><rect x="8" y="7" width="2" height="1" fill="#f8f0a0"/><rect x="10" y="7" width="4" height="1" fill="#1878d0"/><rect x="14" y="7" width="1" height="1" fill="#000000"/><rect x="0" y="8" width="13" height="1" fill="#1878d0"/><rect x="13" y="8" width="2" height="1" fill="#000000"/><rect x="0" y="9" width="1" height="1" fill="#1878d0"/><rect x="1" y="9" width="2" height="1" fill="#000000"/><rect x="3" y="9" width="9" height="1" fill="#1878d0"/><rect x="12" y="9" width="1" height="1" fill="#000000"/><rect x="13" y="9" width="1" height="1" fill="#ffffff"/><rect x="14" y="9" width="1" height="1" fill="#000000"/><rect x="0" y="10" width="1" height="1" fill="#1878d0"/><rect x="1" y="10" width="2" height="1" fill="#ffffff"/><rect x="3" y="10" width="2" height="1" fill="#000000"/><rect x="5" y="10" width="6" height="1" fill="#1878d0"/><rect x="11" y="10" width="1" height="1" fill="#000000"/><rect x="12" y="10" width="2" height="1" fill="#ffffff"/><rect x="14" y="10" width="1" height="1" fill="#000000"/><rect x="0" y="11" width="1" height="1" fill="#000000"/><rect x="1" y="11" width="4" height="1" fill="#ffffff"/><rect x="5" y="11" width="2" height="1" fill="#000000"/><rect x="7" y="11" width="3" height="1" fill="#1878d0"/><rect x="10" y="11" width="1" height="1" fill="#000000"/><rect x="11" y="11" width="2" height="1" fill="#ffffff"/><rect x="13" y="11" width="1" height="1" fill="#1878d0"/><rect x="14" y="11" width="1" height="1" fill="#000000"/><rect x="1" y="12" width="1" height="1" fill="#000000"/><rect x="2" y="12" width="5" height="1" fill="#ffffff"/><rect x="7" y="12" width="2" height="1" fill="#000000"/><rect x="9" y="12" width="1" height="1" fill="#1878d0"/><rect x="10" y="12" width="2" height="1" fill="#ffffff"/><rect x="12" y="12" width="1" height="1" fill="#1878d0"/><rect x="13" y="12" width="1" height="1" fill="#000000"/><rect x="2" y="13" width="2" height="1" fill="#000000"/><rect x="4" y="13" width="5" height="1" fill="#ffffff"/><rect x="9" y="13" width="1" height="1" fill="#000000"/><rect x="10" y="13" width="1" height="1" fill="#ffffff"/><rect x="11" y="13" width="1" height="1" fill="#1878d0"/><rect x="12" y="13" width="1" height="1" fill="#000000"/><rect x="4" y="14" width="2" height="1" fill="#000000"/><rect x="6" y="14" width="4" height="1" fill="#ffffff"/><rect x="10" y="14" width="1" height="1" fill="#1878d0"/><rect x="11" y="14" width="1" height="1" fill="#000000"/><rect x="6" y="15" width="3" height="1" fill="#000000"/><rect x="9" y="15" width="1" height="1" fill="#1878d0"/><rect x="10" y="15" width="1" height="1" fill="#000000"/></svg>
<div class="a rb" style="left:0px;top:38px;width:160px;height:17px;background:#c0c0c0"></div>
<div class="t" style="left:10px;top:40px;">Name</div>
<div class="a rb" style="left:160px;top:38px;width:38px;height:17px;background:#c0c0c0"></div>
<div class="t" style="left:167px;top:40px;">#Ext</div>
<div class="a rb" style="left:198px;top:38px;width:68px;height:17px;background:#c0c0c0"></div>
<div class="t" style="left:207px;top:40px;">Size</div>
<div class="a rb" style="left:266px;top:38px;width:100px;height:17px;background:#c0c0c0"></div>
<div class="t" style="left:275px;top:40px;">Date  m/d/y</div>
<div class="a" style="left:0px;top:55px;width:356px;height:481px;background:#f8f8f8;overflow:hidden">
<svg class="a" style="left:0;top:0px" width="17" height="12"><use href="#i-up"/></svg>
<div class="t" style="left:20px;top:3px;color:#000;letter-spacing:-0.2px"></div>
<div class="t" style="left:165px;top:3px;color:#000;letter-spacing:-0.2px"></div>
<div class="t" style="left:203px;top:3px;color:#000;letter-spacing:0px">0</div>
<div class="t" style="left:270px;top:3px;color:#000;letter-spacing:0.25px">00/00/0  00:00</div>
<svg class="a" style="left:2px;top:19px" width="16" height="14"><use href="#i-dir"/></svg>
<div class="t" style="left:20px;top:20px;color:#000;letter-spacing:-0.2px">ABC Amber CHM Converter</div>
<div class="t" style="left:165px;top:20px;color:#000;letter-spacing:-0.2px">DIR</div>
<div class="t" style="left:203px;top:20px;color:#000;letter-spacing:0px">0</div>
<div class="t" style="left:270px;top:20px;color:#000;letter-spacing:0.25px">05/23/2009  03:1</div>
<svg class="a" style="left:2px;top:36px" width="16" height="14"><use href="#i-dir"/></svg>
<div class="t" style="left:20px;top:37px;color:#000;letter-spacing:-0.2px">ABC Amber HLP Converter</div>
<div class="t" style="left:165px;top:37px;color:#000;letter-spacing:-0.2px">DIR</div>
<div class="t" style="left:203px;top:37px;color:#000;letter-spacing:0px">0</div>
<div class="t" style="left:270px;top:37px;color:#000;letter-spacing:0.25px">05/23/2009  02:2</div>
<svg class="a" style="left:2px;top:53px" width="16" height="14"><use href="#i-dir"/></svg>
<div class="t" style="left:20px;top:54px;color:#000;letter-spacing:-0.2px">Bin</div>
<div class="t" style="left:165px;top:54px;color:#000;letter-spacing:-0.2px">DIR</div>
<div class="t" style="left:203px;top:54px;color:#000;letter-spacing:0px">0</div>
<div class="t" style="left:270px;top:54px;color:#000;letter-spacing:0.25px">05/21/2009  16:3</div>
<svg class="a" style="left:2px;top:70px" width="16" height="14"><use href="#i-dir"/></svg>
<div class="t" style="left:20px;top:71px;color:#000;letter-spacing:-0.2px">Common Files</div>
<div class="t" style="left:165px;top:71px;color:#000;letter-spacing:-0.2px">DIR</div>
<div class="t" style="left:203px;top:71px;color:#000;letter-spacing:0px">0</div>
<div class="t" style="left:270px;top:71px;color:#000;letter-spacing:0.25px">05/21/2009  17:2</div>
<svg class="a" style="left:2px;top:87px" width="16" height="14"><use href="#i-dir"/></svg>
<div class="t" style="left:20px;top:88px;color:#000;letter-spacing:-0.2px">COMPAQ</div>
<div class="t" style="left:165px;top:88px;color:#000;letter-spacing:-0.2px">DIR</div>
<div class="t" style="left:203px;top:88px;color:#000;letter-spacing:0px">0</div>
<div class="t" style="left:270px;top:88px;color:#000;letter-spacing:0.25px">03/21/2009  16:1</div>
<svg class="a" style="left:2px;top:104px" width="16" height="14"><use href="#i-dir"/></svg>
<div class="t" style="left:20px;top:105px;color:#000;letter-spacing:-0.2px">ComPlus Applications</div>
<div class="t" style="left:165px;top:105px;color:#000;letter-spacing:-0.2px">DIR</div>
<div class="t" style="left:203px;top:105px;color:#000;letter-spacing:0px">0</div>
<div class="t" style="left:270px;top:105px;color:#000;letter-spacing:0.25px">03/21/2009  15:3</div>
<svg class="a" style="left:2px;top:121px" width="16" height="14"><use href="#i-dir"/></svg>
<div class="t" style="left:20px;top:122px;color:#000;letter-spacing:-0.2px">FRISK Software</div>
<div class="t" style="left:165px;top:122px;color:#000;letter-spacing:-0.2px">DIR</div>
<div class="t" style="left:203px;top:122px;color:#000;letter-spacing:0px">0</div>
<div class="t" style="left:270px;top:122px;color:#000;letter-spacing:0.25px">03/25/2009  20:5</div>
<svg class="a" style="left:2px;top:138px" width="16" height="14"><use href="#i-dir"/></svg>
<div class="t" style="left:20px;top:139px;color:#000;letter-spacing:-0.2px">HTML Help Workshop</div>
<div class="t" style="left:165px;top:139px;color:#000;letter-spacing:-0.2px">DIR</div>
<div class="t" style="left:203px;top:139px;color:#000;letter-spacing:0px">0</div>
<div class="t" style="left:270px;top:139px;color:#000;letter-spacing:0.25px">05/21/2009  10:4</div>
<svg class="a" style="left:2px;top:155px" width="16" height="14"><use href="#i-dir"/></svg>
<div class="a" style="left:0;top:158px;width:6px;height:5px;background:#808080;box-shadow:inset 0 1px #000,inset -1px 0 #000,inset 0 -1px #000"></div>
<div class="t" style="left:20px;top:156px;color:#000;letter-spacing:-0.2px">InstallShield Installation Info...</div>
<div class="t" style="left:165px;top:156px;color:#000;letter-spacing:-0.2px">DIR</div>
<div class="t" style="left:203px;top:156px;color:#000;letter-spacing:0px">0</div>
<div class="t" style="left:270px;top:156px;color:#000;letter-spacing:0.25px">05/21/2009  10:4</div>
<svg class="a" style="left:2px;top:172px" width="16" height="14"><use href="#i-dir"/></svg>
<div class="t" style="left:20px;top:173px;color:#000;letter-spacing:-0.2px">Intel</div>
<div class="t" style="left:165px;top:173px;color:#000;letter-spacing:-0.2px">DIR</div>
<div class="t" style="left:203px;top:173px;color:#000;letter-spacing:0px">0</div>
<div class="t" style="left:270px;top:173px;color:#000;letter-spacing:0.25px">03/24/2009  10:4</div>
<svg class="a" style="left:2px;top:189px" width="16" height="14"><use href="#i-dir"/></svg>
<div class="t" style="left:20px;top:190px;color:#000;letter-spacing:-0.2px">Internet Explorer</div>
<div class="t" style="left:165px;top:190px;color:#000;letter-spacing:-0.2px">DIR</div>
<div class="t" style="left:203px;top:190px;color:#000;letter-spacing:0px">0</div>
<div class="t" style="left:270px;top:190px;color:#000;letter-spacing:0.25px">03/24/2009  10:4</div>
<svg class="a" style="left:2px;top:206px" width="16" height="14"><use href="#i-dir"/></svg>
<div class="t" style="left:20px;top:207px;color:#000;letter-spacing:-0.2px">Islam</div>
<div class="t" style="left:165px;top:207px;color:#000;letter-spacing:-0.2px">DIR</div>
<div class="t" style="left:203px;top:207px;color:#000;letter-spacing:0px">0</div>
<div class="t" style="left:270px;top:207px;color:#000;letter-spacing:0.25px">03/24/2009  10:4</div>
<svg class="a" style="left:2px;top:223px" width="16" height="14"><use href="#i-dir"/></svg>
<div class="t" style="left:20px;top:224px;color:#000;letter-spacing:-0.2px">JGsoft</div>
<div class="t" style="left:165px;top:224px;color:#000;letter-spacing:-0.2px">DIR</div>
<div class="t" style="left:203px;top:224px;color:#000;letter-spacing:0px">0</div>
<div class="t" style="left:270px;top:224px;color:#000;letter-spacing:0.25px">03/24/2009  10:4</div>
<svg class="a" style="left:2px;top:240px" width="16" height="14"><use href="#i-dir"/></svg>
<div class="t" style="left:20px;top:241px;color:#000;letter-spacing:-0.2px">Lavasoft</div>
<div class="t" style="left:165px;top:241px;color:#000;letter-spacing:-0.2px">DIR</div>
<div class="t" style="left:203px;top:241px;color:#000;letter-spacing:0px">0</div>
<div class="t" style="left:270px;top:241px;color:#000;letter-spacing:0.25px">03/24/2009  10:4</div>
<svg class="a" style="left:2px;top:257px" width="16" height="14"><use href="#i-dir"/></svg>
<div class="t" style="left:20px;top:258px;color:#000;letter-spacing:-0.2px">Messenger</div>
<div class="t" style="left:165px;top:258px;color:#000;letter-spacing:-0.2px">DIR</div>
<div class="t" style="left:203px;top:258px;color:#000;letter-spacing:0px">0</div>
<div class="t" style="left:270px;top:258px;color:#000;letter-spacing:0.25px">03/24/2009  10:4</div>
<svg class="a" style="left:2px;top:274px" width="16" height="14"><use href="#i-dir"/></svg>
<div class="t" style="left:20px;top:275px;color:#000;letter-spacing:-0.2px">microsoft frontpage</div>
<div class="t" style="left:165px;top:275px;color:#000;letter-spacing:-0.2px">DIR</div>
<div class="t" style="left:203px;top:275px;color:#000;letter-spacing:0px">0</div>
<div class="t" style="left:270px;top:275px;color:#000;letter-spacing:0.25px">03/24/2009  10:4</div>
<svg class="a" style="left:2px;top:291px" width="16" height="14"><use href="#i-dir"/></svg>
<div class="t" style="left:20px;top:292px;color:#000;letter-spacing:-0.2px">Microsoft SDKs</div>
<div class="t" style="left:165px;top:292px;color:#000;letter-spacing:-0.2px">DIR</div>
<div class="t" style="left:203px;top:292px;color:#000;letter-spacing:0px">0</div>
<div class="t" style="left:270px;top:292px;color:#000;letter-spacing:0.25px">03/24/2009  10:4</div>
<svg class="a" style="left:2px;top:308px" width="16" height="14"><use href="#i-dir"/></svg>
<div class="t" style="left:20px;top:309px;color:#000;letter-spacing:-0.2px">Microsoft Silverlight</div>
<div class="t" style="left:165px;top:309px;color:#000;letter-spacing:-0.2px">DIR</div>
<div class="t" style="left:203px;top:309px;color:#000;letter-spacing:0px">0</div>
<div class="t" style="left:270px;top:309px;color:#000;letter-spacing:0.25px">03/24/2009  10:4</div>
<svg class="a" style="left:2px;top:325px" width="16" height="14"><use href="#i-dir"/></svg>
<div class="t" style="left:20px;top:326px;color:#000;letter-spacing:-0.2px">Microsoft SQL Server</div>
<div class="t" style="left:165px;top:326px;color:#000;letter-spacing:-0.2px">DIR</div>
<div class="t" style="left:203px;top:326px;color:#000;letter-spacing:0px">0</div>
<div class="t" style="left:270px;top:326px;color:#000;letter-spacing:0.25px">03/24/2009  10:4</div>
<svg class="a" style="left:2px;top:342px" width="16" height="14"><use href="#i-dir"/></svg>
<div class="t" style="left:20px;top:343px;color:#000;letter-spacing:-0.2px">Microsoft SQL Server Comp...</div>
<div class="t" style="left:165px;top:343px;color:#000;letter-spacing:-0.2px">DIR</div>
<div class="t" style="left:203px;top:343px;color:#000;letter-spacing:0px">0</div>
<div class="t" style="left:270px;top:343px;color:#000;letter-spacing:0.25px">03/24/2009  10:4</div>
<svg class="a" style="left:2px;top:359px" width="16" height="14"><use href="#i-dir"/></svg>
<div class="t" style="left:20px;top:360px;color:#000;letter-spacing:-0.2px">Microsoft Synchronization S...</div>
<div class="t" style="left:165px;top:360px;color:#000;letter-spacing:-0.2px">DIR</div>
<div class="t" style="left:203px;top:360px;color:#000;letter-spacing:0px">0</div>
<div class="t" style="left:270px;top:360px;color:#000;letter-spacing:0.25px">03/24/2009  10:4</div>
<svg class="a" style="left:2px;top:376px" width="16" height="14"><use href="#i-dir"/></svg>
<div class="t" style="left:20px;top:377px;color:#000;letter-spacing:-0.2px">Microsoft Visual Studio 9.0</div>
<div class="t" style="left:165px;top:377px;color:#000;letter-spacing:-0.2px">DIR</div>
<div class="t" style="left:203px;top:377px;color:#000;letter-spacing:0px">0</div>
<div class="t" style="left:270px;top:377px;color:#000;letter-spacing:0.25px">03/24/2009  10:4</div>
<svg class="a" style="left:2px;top:393px" width="16" height="14"><use href="#i-dir"/></svg>
<div class="t" style="left:20px;top:394px;color:#000;letter-spacing:-0.2px">Microsoft Web Designer T...</div>
<div class="t" style="left:165px;top:394px;color:#000;letter-spacing:-0.2px">DIR</div>
<div class="t" style="left:203px;top:394px;color:#000;letter-spacing:0px">0</div>
<div class="t" style="left:270px;top:394px;color:#000;letter-spacing:0.25px">03/24/2009  10:4</div>
<svg class="a" style="left:2px;top:410px" width="16" height="14"><use href="#i-dir"/></svg>
<div class="t" style="left:20px;top:411px;color:#000;letter-spacing:-0.2px">Microsoft.NET</div>
<div class="t" style="left:165px;top:411px;color:#000;letter-spacing:-0.2px">DIR</div>
<div class="t" style="left:203px;top:411px;color:#000;letter-spacing:0px">0</div>
<div class="t" style="left:270px;top:411px;color:#000;letter-spacing:0.25px">03/24/2009  10:4</div>
<svg class="a" style="left:2px;top:427px" width="16" height="14"><use href="#i-dir"/></svg>
<div class="t" style="left:20px;top:428px;color:#000;letter-spacing:-0.2px">Movie Maker</div>
<div class="t" style="left:165px;top:428px;color:#000;letter-spacing:-0.2px">DIR</div>
<div class="t" style="left:203px;top:428px;color:#000;letter-spacing:0px">0</div>
<div class="t" style="left:270px;top:428px;color:#000;letter-spacing:0.25px">03/24/2009  10:4</div>
<svg class="a" style="left:2px;top:444px" width="16" height="14"><use href="#i-dir"/></svg>
<div class="t" style="left:20px;top:445px;color:#000;letter-spacing:-0.2px">MSBuild</div>
<div class="t" style="left:165px;top:445px;color:#000;letter-spacing:-0.2px">DIR</div>
<div class="t" style="left:203px;top:445px;color:#000;letter-spacing:0px">0</div>
<div class="t" style="left:270px;top:445px;color:#000;letter-spacing:0.25px">03/24/2009  10:4</div>
<svg class="a" style="left:2px;top:461px" width="16" height="14"><use href="#i-dir"/></svg>
<div class="t" style="left:20px;top:462px;color:#000;letter-spacing:-0.2px">MSN</div>
<div class="t" style="left:165px;top:462px;color:#000;letter-spacing:-0.2px">DIR</div>
<div class="t" style="left:203px;top:462px;color:#000;letter-spacing:0px">0</div>
<div class="t" style="left:270px;top:462px;color:#000;letter-spacing:0.25px">03/24/2009  10:4</div>
<svg class="a" style="left:2px;top:478px" width="16" height="14"><use href="#i-dir"/></svg>
<div class="t" style="left:20px;top:478px;color:#000;letter-spacing:-0.2px">MSN Gaming Zone</div>
<div class="t" style="left:165px;top:478px;color:#000;letter-spacing:-0.2px">DIR</div>
<div class="t" style="left:203px;top:478px;color:#000;letter-spacing:0px">0</div>
<div class="t" style="left:270px;top:478px;color:#000;letter-spacing:0.25px">03/24/2009  10:4</div>
</div>
<div class="a rb2" style="left:356px;top:38px;width:16px;height:16px;background:#c0c0c0;"></div>
<svg class="a" style="left:356px;top:38px" width="16" height="16" shape-rendering="crispEdges"><path d="M7 6h1v1h1v1h1v1h1v1h-7v-1h1v-1h1v-1h1z" fill="#000"/></svg>
<div class="a rb2" style="left:356px;top:54px;width:16px;height:482px;background:#c0c0c0;"></div>
<svg class="a" style="left:372px;top:38px" width="56" height="514" viewBox="372 38 56 514" shape-rendering="crispEdges"><rect x="372" y="38" width="56" height="514" fill="url(#hM)"/></svg>
<div class="a" style="left:372px;top:38px;width:56px;height:23px;background:#c0c0c0"></div>
<div class="a" style="left:373px;top:39px;width:53px;height:21px;background:#f8f8f8;box-shadow:inset 1px 1px #000,inset -1px 0 #000"></div>
<div class="a rb2" style="left:410px;top:40px;width:15px;height:19px;background:#c0c0c0;"></div>
<svg class="a" style="left:410px;top:40px" width="15" height="19" shape-rendering="crispEdges"><path d="M4 8h7v1h-1v1h-1v1h-1v1h-1v-1h-1v-1h-1v-1h-1z" fill="#000"/></svg>
<div class="t" style="left:395px;top:43px">C:\</div>
<svg class="a" style="left:377px;top:45px;" width="17" height="8" shape-rendering="crispEdges"><rect x="4" y="0" width="9" height="1" fill="#808080"/><rect x="2" y="1" width="2" height="1" fill="#808080"/><rect x="4" y="1" width="2" height="1" fill="#c0c0c0"/><rect x="6" y="1" width="3" height="1" fill="#ffffff"/><rect x="9" y="1" width="2" height="1" fill="#c0c0c0"/><rect x="11" y="1" width="2" height="1" fill="#ffffff"/><rect x="13" y="1" width="2" height="1" fill="#808080"/><rect x="1" y="2" width="1" height="1" fill="#808080"/><rect x="2" y="2" width="2" height="1" fill="#c0c0c0"/><rect x="4" y="2" width="2" height="1" fill="#808080"/><rect x="6" y="2" width="4" height="1" fill="#ffffff"/><rect x="10" y="2" width="5" height="1" fill="#c0c0c0"/><rect x="15" y="2" width="1" height="1" fill="#808080"/><rect x="0" y="3" width="1" height="1" fill="#808080"/><rect x="1" y="3" width="1" height="1" fill="#c0c0c0"/><rect x="2" y="3" width="2" height="1" fill="#808080"/><rect x="4" y="3" width="8" height="1" fill="#c0c0c0"/><rect x="12" y="3" width="1" height="1" fill="#1878d0"/><rect x="13" y="3" width="3" height="1" fill="#c0c0c0"/><rect x="16" y="3" width="1" height="1" fill="#808080"/><rect x="0" y="4" width="2" height="1" fill="#808080"/><rect x="2" y="4" width="2" height="1" fill="#c0c0c0"/><rect x="4" y="4" width="3" height="1" fill="#808080"/><rect x="7" y="4" width="3" height="1" fill="#c0c0c0"/><rect x="10" y="4" width="2" height="1" fill="#1878d0"/><rect x="12" y="4" width="2" height="1" fill="#c0c0c0"/><rect x="14" y="4" width="1" height="1" fill="#1878d0"/><rect x="15" y="4" width="1" height="1" fill="#c0c0c0"/><rect x="16" y="4" width="1" height="1" fill="#808080"/><rect x="1" y="5" width="3" height="1" fill="#808080"/><rect x="4" y="5" width="3" height="1" fill="#c0c0c0"/><rect x="7" y="5" width="1" height="1" fill="#808080"/><rect x="8" y="5" width="2" height="1" fill="#1878d0"/><rect x="10" y="5" width="2" height="1" fill="#c0c0c0"/><rect x="12" y="5" width="2" height="1" fill="#1878d0"/><rect x="14" y="5" width="1" height="1" fill="#c0c0c0"/><rect x="15" y="5" width="1" height="1" fill="#808080"/><rect x="2" y="6" width="6" height="1" fill="#808080"/><rect x="8" y="6" width="4" height="1" fill="#1878d0"/><rect x="12" y="6" width="3" height="1" fill="#808080"/><rect x="4" y="7" width="4" height="1" fill="#808080"/><rect x="8" y="7" width="1" height="1" fill="#1878d0"/><rect x="9" y="7" width="4" height="1" fill="#808080"/></svg>
<div class="a" style="left:379px;top:61px;width:42px;height:460px;background:#c0c0c0;box-shadow:inset 0 1px #808080,inset 0 2px #fff"></div>
<svg class="a" style="left:372px;top:61px" width="7" height="491" viewBox="372 61 7 491" shape-rendering="crispEdges"><rect x="372" y="61" width="7" height="491" fill="url(#hM)"/></svg>
<svg class="a" style="left:421px;top:61px" width="7" height="491" viewBox="421 61 7 491" shape-rendering="crispEdges"><rect x="421" y="61" width="7" height="491" fill="url(#hM)"/></svg>
<div class="a rb" style="left:380px;top:66px;width:39px;height:38px;background:#c0c0c0;"></div>
<div class="a rb" style="left:380px;top:104px;width:39px;height:38px;background:#c0c0c0;"></div>
<div class="a rb" style="left:380px;top:142px;width:39px;height:38px;background:#c0c0c0;"></div>
<div class="a rb" style="left:380px;top:180px;width:39px;height:38px;background:#c0c0c0;"></div>
<svg class="a" style="left:380px;top:66px" width="39" height="38" shape-rendering="crispEdges">
<path d="M4 6h1v-1h1v-1h3v7h-5z" fill="#e8e8e8"/><path d="M3 7h1v-1h1v-1h1v-1h1" stroke="#808080" fill="none"/><rect x="4" y="10" width="5" height="1" fill="#000"/>
<rect x="9" y="3" width="22" height="27" fill="#fff"/><rect x="8" y="3" width="1" height="27" fill="#808080"/><rect x="9" y="2" width="20" height="1" fill="#808080"/><rect x="31" y="3" width="1" height="25" fill="#000"/>
<rect x="10" y="30" width="7" height="3" fill="#fff"/><rect x="9" y="30" width="1" height="3" fill="#808080"/>
<rect x="17" y="28" width="17" height="5" fill="#fff"/><rect x="17" y="28" width="17" height="1" fill="#808080"/><rect x="17" y="33" width="17" height="1" fill="#000"/><rect x="34" y="29" width="1" height="4" fill="#000"/><rect x="10" y="33" width="7" height="1" fill="#808080"/>
<path d="M18 27L33 12V27z" fill="#d0d0d0"/>
<g fill="#000"><rect x="12" y="8" width="3" height="1"/><rect x="16" y="8" width="3" height="1"/><rect x="20" y="8" width="1" height="1"/><rect x="22" y="8" width="3" height="1"/>
<rect x="12" y="12" width="2" height="1"/><rect x="15" y="12" width="3" height="1"/><rect x="20" y="12" width="1" height="1"/>
<rect x="12" y="16" width="3" height="1"/><rect x="16" y="16" width="3" height="1"/>
<rect x="12" y="19" width="1" height="1"/><rect x="14" y="19" width="2" height="1"/>
<rect x="12" y="22" width="2" height="1"/><rect x="12" y="25" width="1" height="1"/></g>
</svg>
<svg class="a" style="left:380px;top:66px" width="39" height="38">
<path d="M17 21L33 5L36 8L20 24Z" fill="#000080"/>
<path d="M18.5 21.5L34 6" stroke="#3080e0" stroke-width="1"/>
<path d="M17 21L20 24L12 28Z" fill="#f0e080"/>
</svg>
<svg class="a" style="left:380px;top:104px" width="39" height="38" shape-rendering="crispEdges"><rect x="3" y="3" width="21" height="24" fill="#fff"/><rect x="3" y="3" width="21" height="1" fill="#808080"/><rect x="3" y="3" width="1" height="24" fill="#808080"/><rect x="24" y="4" width="1" height="24" fill="#000"/><rect x="4" y="27" width="21" height="1" fill="#000"/><g fill="#000"><rect x="6" y="6" width="1" height="1"/><rect x="7" y="6" width="1" height="1"/><rect x="8" y="6" width="1" height="1"/><rect x="6" y="7" width="1" height="1"/><rect x="6" y="8" width="1" height="1"/><rect x="6" y="9" width="1" height="1"/><rect x="6" y="10" width="1" height="1"/><rect x="7" y="10" width="1" height="1"/><rect x="8" y="10" width="1" height="1"/><rect x="10" y="6" width="1" height="1"/><rect x="11" y="6" width="1" height="1"/><rect x="12" y="6" width="1" height="1"/><rect x="10" y="7" width="1" height="1"/><rect x="12" y="7" width="1" height="1"/><rect x="10" y="8" width="1" height="1"/><rect x="12" y="8" width="1" height="1"/><rect x="10" y="9" width="1" height="1"/><rect x="12" y="9" width="1" height="1"/><rect x="10" y="10" width="1" height="1"/><rect x="11" y="10" width="1" height="1"/><rect x="12" y="10" width="1" height="1"/><rect x="14" y="6" width="1" height="1"/><rect x="15" y="6" width="1" height="1"/><rect x="16" y="6" width="1" height="1"/><rect x="14" y="7" width="1" height="1"/><rect x="16" y="7" width="1" height="1"/><rect x="14" y="8" width="1" height="1"/><rect x="15" y="8" width="1" height="1"/><rect x="16" y="8" width="1" height="1"/><rect x="14" y="9" width="1" height="1"/><rect x="14" y="10" width="1" height="1"/><rect x="18" y="6" width="1" height="1"/><rect x="20" y="6" width="1" height="1"/><rect x="18" y="7" width="1" height="1"/><rect x="20" y="7" width="1" height="1"/><rect x="19" y="8" width="1" height="1"/><rect x="19" y="9" width="1" height="1"/><rect x="19" y="10" width="1" height="1"/><rect x="6" y="13" width="9" height="1"/><rect x="6" y="16" width="9" height="1"/><rect x="6" y="18" width="9" height="1"/><rect x="6" y="21" width="9" height="1"/><rect x="6" y="23" width="9" height="1"/></g><rect x="13" y="12" width="20" height="21" fill="#fff"/><rect x="13" y="12" width="20" height="1" fill="#808080"/><rect x="13" y="12" width="1" height="21" fill="#808080"/><rect x="33" y="13" width="1" height="21" fill="#000"/><rect x="14" y="33" width="20" height="1" fill="#000"/><g fill="#000"><rect x="16" y="15" width="1" height="1"/><rect x="17" y="15" width="1" height="1"/><rect x="18" y="15" width="1" height="1"/><rect x="16" y="16" width="1" height="1"/><rect x="16" y="17" width="1" height="1"/><rect x="16" y="18" width="1" height="1"/><rect x="16" y="19" width="1" height="1"/><rect x="17" y="19" width="1" height="1"/><rect x="18" y="19" width="1" height="1"/><rect x="20" y="15" width="1" height="1"/><rect x="21" y="15" width="1" height="1"/><rect x="22" y="15" width="1" height="1"/><rect x="20" y="16" width="1" height="1"/><rect x="22" y="16" width="1" height="1"/><rect x="20" y="17" width="1" height="1"/><rect x="22" y="17" width="1" height="1"/><rect x="20" y="18" width="1" height="1"/><rect x="22" y="18" width="1" height="1"/><rect x="20" y="19" width="1" height="1"/><rect x="21" y="19" width="1" height="1"/><rect x="22" y="19" width="1" height="1"/><rect x="24" y="15" width="1" height="1"/><rect x="25" y="15" width="1" height="1"/><rect x="26" y="15" width="1" height="1"/><rect x="24" y="16" width="1" height="1"/><rect x="26" y="16" width="1" height="1"/><rect x="24" y="17" width="1" height="1"/><rect x="25" y="17" width="1" height="1"/><rect x="26" y="17" width="1" height="1"/><rect x="24" y="18" width="1" height="1"/><rect x="24" y="19" width="1" height="1"/><rect x="28" y="15" width="1" height="1"/><rect x="30" y="15" width="1" height="1"/><rect x="28" y="16" width="1" height="1"/><rect x="30" y="16" width="1" height="1"/><rect x="29" y="17" width="1" height="1"/><rect x="29" y="18" width="1" height="1"/><rect x="29" y="19" width="1" height="1"/><rect x="15" y="21" width="5" height="1"/><rect x="15" y="24" width="16" height="1"/><rect x="15" y="27" width="8" height="1"/><rect x="15" y="30" width="6" height="1"/></g><g fill="#f0e040"><rect x="25" y="26" width="5" height="1"/><rect x="24" y="27" width="1" height="5"/><rect x="30" y="27" width="1" height="5"/><rect x="25" y="32" width="5" height="1"/><rect x="26" y="25" width="1" height="1"/><rect x="28" y="25" width="1" height="1"/><rect x="23" y="28" width="1" height="1"/><rect x="31" y="30" width="1" height="1"/></g><g fill="#000"><rect x="27" y="29" width="1" height="1"/><rect x="31" y="27" width="1" height="1"/><rect x="23" y="31" width="1" height="1"/><rect x="31" y="32" width="1" height="1"/><rect x="25" y="33" width="1" height="1"/></g></svg>
<svg class="a" style="left:380px;top:142px" width="39" height="38">
<rect x="4.5" y="5.5" width="25" height="29" fill="#fff" stroke="#808080"/><path d="M30 6v29h-25" stroke="#000" fill="none"/>
<g fill="#000"><rect x="6" y="3" width="1" height="3"/><rect x="9" y="3" width="1" height="3"/><rect x="12" y="3" width="1" height="3"/><rect x="15" y="3" width="1" height="3"/><rect x="18" y="3" width="1" height="3"/><rect x="21" y="3" width="1" height="3"/><rect x="24" y="3" width="1" height="3"/><rect x="27" y="3" width="1" height="3"/>
<rect x="6" y="10" width="10" height="2"/><path d="M16 10l7 7h-2l-6-6z"/><path d="M24 13v8h-8z"/>
<rect x="6" y="17" width="6" height="1"/><rect x="6" y="20" width="12" height="1"/><rect x="6" y="22" width="12" height="1"/><rect x="6" y="24" width="12" height="1"/><rect x="6" y="26" width="10" height="1"/><rect x="6" y="29" width="6" height="1"/></g>
<path d="M20.5 24.5h3l1 -2h3l1 2h4.5v9h-12.5z" fill="#f8e880" stroke="#808080"/><path d="M34 25v9h-13" stroke="#000" fill="none"/>
</svg>
<svg class="a" style="left:380px;top:180px" width="39" height="38">
<path d="M4 11l3-4h9l3 4z" fill="#f8e070"/>
<path d="M3.5 11.5h15l1 1.5h14.5v20.5h-30.5z" fill="#f8e880" stroke="#808080"/>
<path d="M34.5 13v21.5h-30" stroke="#000" fill="none"/>
<path d="M4.5 12v21" stroke="#fff8c0"/>
</svg>
<div class="a rb" style="left:428px;top:38px;width:160px;height:17px;background:#c0c0c0"></div>
<div class="t" style="left:438px;top:40px;">Name</div>
<div class="a rb" style="left:588px;top:38px;width:38px;height:17px;background:#c0c0c0"></div>
<div class="t" style="left:595px;top:40px;">#Ext</div>
<div class="a rb" style="left:626px;top:38px;width:68px;height:17px;background:#c0c0c0"></div>
<div class="t" style="left:635px;top:40px;">Size</div>
<div class="a rb" style="left:694px;top:38px;width:100px;height:17px;background:#c0c0c0"></div>
<div class="t" style="left:703px;top:40px;">Date  m/d/y</div>
<div class="a" style="left:428px;top:55px;width:356px;height:481px;background:#f8f8f8;overflow:hidden">
<svg class="a" style="left:0;top:0px" width="17" height="12"><use href="#i-up"/></svg>
<div class="t" style="left:20px;top:3px;color:#000;letter-spacing:-0.2px"></div>
<div class="t" style="left:165px;top:3px;color:#000;letter-spacing:-0.2px"></div>
<div class="t" style="left:203px;top:3px;color:#000;letter-spacing:0px">0</div>
<div class="t" style="left:270px;top:3px;color:#000;letter-spacing:0.25px">00/00/0  00:00</div>
<svg class="a" style="left:2px;top:19px" width="16" height="14"><use href="#i-dir"/></svg>
<div class="t" style="left:20px;top:20px;color:#000;letter-spacing:-0.2px">bmp</div>
<div class="t" style="left:165px;top:20px;color:#000;letter-spacing:-0.2px">DIR</div>
<div class="t" style="left:203px;top:20px;color:#000;letter-spacing:0px">0</div>
<div class="t" style="left:270px;top:20px;color:#000;letter-spacing:0.25px">10/05/2007  16:5</div>
<svg class="a" style="left:2px;top:36px" width="16" height="14"><use href="#i-dir"/></svg>
<div class="t" style="left:20px;top:37px;color:#000;letter-spacing:-0.2px">noused</div>
<div class="t" style="left:165px;top:37px;color:#000;letter-spacing:-0.2px">DIR</div>
<div class="t" style="left:203px;top:37px;color:#000;letter-spacing:0px">0</div>
<div class="t" style="left:270px;top:37px;color:#000;letter-spacing:0.25px">10/05/2007  16:5</div>
<div class="a" style="left:18px;top:51px;width:338px;height:17px;background:#000080"></div>
<svg class="a" style="left:2px;top:53px" width="16" height="14"><use href="#i-dir"/></svg>
<div class="t" style="left:20px;top:54px;color:#fff;letter-spacing:-0.2px">probe</div>
<div class="t" style="left:165px;top:54px;color:#fff;letter-spacing:-0.2px">DIR</div>
<div class="t" style="left:203px;top:54px;color:#fff;letter-spacing:0px">0</div>
<div class="t" style="left:270px;top:54px;color:#fff;letter-spacing:0.25px">05/30/2009  15:3</div>
<svg class="a" style="left:4px;top:68px" width="14" height="16"><use href="#i-gif"/></svg>
<div class="t" style="left:20px;top:71px;color:#000;letter-spacing:-0.2px">advban1</div>
<div class="t" style="left:165px;top:71px;color:#000;letter-spacing:-0.2px">gif</div>
<div class="t" style="left:203px;top:71px;color:#000;letter-spacing:0px">10.300</div>
<div class="t" style="left:270px;top:71px;color:#000;letter-spacing:0.25px">08/01/2004  00:5</div>
<svg class="a" style="left:4px;top:85px" width="14" height="16"><use href="#i-gif"/></svg>
<div class="t" style="left:20px;top:88px;color:#000;letter-spacing:-0.2px">advban1a</div>
<div class="t" style="left:165px;top:88px;color:#000;letter-spacing:-0.2px">gif</div>
<div class="t" style="left:203px;top:88px;color:#000;letter-spacing:0px">10.628</div>
<div class="t" style="left:270px;top:88px;color:#000;letter-spacing:0.25px">01/21/2007  09:5</div>
<svg class="a" style="left:4px;top:102px" width="14" height="16"><use href="#i-gif"/></svg>
<div class="t" style="left:20px;top:105px;color:#000;letter-spacing:-0.2px">advban2</div>
<div class="t" style="left:165px;top:105px;color:#000;letter-spacing:-0.2px">gif</div>
<div class="t" style="left:203px;top:105px;color:#000;letter-spacing:0px">9.120</div>
<div class="t" style="left:270px;top:105px;color:#000;letter-spacing:0.25px">08/01/2004  00:5</div>
<svg class="a" style="left:4px;top:119px" width="14" height="16"><use href="#i-gif"/></svg>
<div class="t" style="left:20px;top:122px;color:#000;letter-spacing:-0.2px">advban3</div>
<div class="t" style="left:165px;top:122px;color:#000;letter-spacing:-0.2px">gif</div>
<div class="t" style="left:203px;top:122px;color:#000;letter-spacing:0px">8.468</div>
<div class="t" style="left:270px;top:122px;color:#000;letter-spacing:0.25px">03/24/2003  05:0</div>
<svg class="a" style="left:4px;top:136px" width="14" height="16"><use href="#i-gif"/></svg>
<div class="t" style="left:20px;top:139px;color:#000;letter-spacing:-0.2px">advban4</div>
<div class="t" style="left:165px;top:139px;color:#000;letter-spacing:-0.2px">gif</div>
<div class="t" style="left:203px;top:139px;color:#000;letter-spacing:0px">4.187</div>
<div class="t" style="left:270px;top:139px;color:#000;letter-spacing:0.25px">03/24/2003  05:5</div>
<svg class="a" style="left:4px;top:153px" width="14" height="16"><use href="#i-gif"/></svg>
<div class="t" style="left:20px;top:156px;color:#000;letter-spacing:-0.2px">advban5</div>
<div class="t" style="left:165px;top:156px;color:#000;letter-spacing:-0.2px">gif</div>
<div class="t" style="left:203px;top:156px;color:#000;letter-spacing:0px">1.000</div>
<div class="t" style="left:270px;top:156px;color:#000;letter-spacing:0.25px">03/24/2003  05:4</div>
<svg class="a" style="left:4px;top:170px" width="14" height="16"><use href="#i-gif"/></svg>
<div class="t" style="left:20px;top:173px;color:#000;letter-spacing:-0.2px">advban5</div>
<div class="t" style="left:165px;top:173px;color:#000;letter-spacing:-0.2px">gif</div>
<div class="t" style="left:203px;top:173px;color:#000;letter-spacing:0px">1.000</div>
<div class="t" style="left:270px;top:173px;color:#000;letter-spacing:0.25px">03/24/2003  06:0</div>
<svg class="a" style="left:4px;top:187px" width="14" height="16"><use href="#i-gif"/></svg>
<div class="t" style="left:20px;top:190px;color:#000;letter-spacing:-0.2px">advban5</div>
<div class="t" style="left:165px;top:190px;color:#000;letter-spacing:-0.2px">gif</div>
<div class="t" style="left:203px;top:190px;color:#000;letter-spacing:0px">1.000</div>
<div class="t" style="left:270px;top:190px;color:#000;letter-spacing:0.25px">02/13/2003  00:5</div>
<svg class="a" style="left:4px;top:204px" width="14" height="16"><use href="#i-gif"/></svg>
<div class="t" style="left:20px;top:207px;color:#000;letter-spacing:-0.2px">advban5</div>
<div class="t" style="left:165px;top:207px;color:#000;letter-spacing:-0.2px">gif</div>
<div class="t" style="left:203px;top:207px;color:#000;letter-spacing:0px">1.000</div>
<div class="t" style="left:270px;top:207px;color:#000;letter-spacing:0.25px">03/16/2007  11:4</div>
<svg class="a" style="left:4px;top:221px" width="14" height="16"><use href="#i-gif"/></svg>
<div class="t" style="left:20px;top:224px;color:#000;letter-spacing:-0.2px">advban5</div>
<div class="t" style="left:165px;top:224px;color:#000;letter-spacing:-0.2px">gif</div>
<div class="t" style="left:203px;top:224px;color:#000;letter-spacing:0px">1.000</div>
<div class="t" style="left:270px;top:224px;color:#000;letter-spacing:0.25px">08/01/2004  00:4</div>
<svg class="a" style="left:4px;top:238px" width="14" height="16"><use href="#i-gif"/></svg>
<div class="t" style="left:20px;top:241px;color:#000;letter-spacing:-0.2px">advban5</div>
<div class="t" style="left:165px;top:241px;color:#000;letter-spacing:-0.2px">gif</div>
<div class="t" style="left:203px;top:241px;color:#000;letter-spacing:0px">1.000</div>
<div class="t" style="left:270px;top:241px;color:#000;letter-spacing:0.25px">09/04/2004  08:2</div>
<svg class="a" style="left:4px;top:255px" width="14" height="16"><use href="#i-gif"/></svg>
<div class="t" style="left:20px;top:258px;color:#000;letter-spacing:-0.2px">advban5</div>
<div class="t" style="left:165px;top:258px;color:#000;letter-spacing:-0.2px">gif</div>
<div class="t" style="left:203px;top:258px;color:#000;letter-spacing:0px">1.000</div>
<div class="t" style="left:270px;top:258px;color:#000;letter-spacing:0.25px">01/21/2007  10:0</div>
<svg class="a" style="left:4px;top:272px" width="14" height="16"><use href="#i-gif"/></svg>
<div class="t" style="left:20px;top:275px;color:#000;letter-spacing:-0.2px">advban5</div>
<div class="t" style="left:165px;top:275px;color:#000;letter-spacing:-0.2px">gif</div>
<div class="t" style="left:203px;top:275px;color:#000;letter-spacing:0px">1.000</div>
<div class="t" style="left:270px;top:275px;color:#000;letter-spacing:0.25px">08/05/2004  14:2</div>
<svg class="a" style="left:4px;top:289px" width="14" height="16"><use href="#i-gif"/></svg>
<div class="t" style="left:20px;top:292px;color:#000;letter-spacing:-0.2px">advban5</div>
<div class="t" style="left:165px;top:292px;color:#000;letter-spacing:-0.2px">gif</div>
<div class="t" style="left:203px;top:292px;color:#000;letter-spacing:0px">1.000</div>
<div class="t" style="left:270px;top:292px;color:#000;letter-spacing:0.25px">02/10/2003  16:3</div>
<svg class="a" style="left:4px;top:306px" width="14" height="16"><use href="#i-gif"/></svg>
<div class="t" style="left:20px;top:309px;color:#000;letter-spacing:-0.2px">advban5</div>
<div class="t" style="left:165px;top:309px;color:#000;letter-spacing:-0.2px">gif</div>
<div class="t" style="left:203px;top:309px;color:#000;letter-spacing:0px">1.000</div>
<div class="t" style="left:270px;top:309px;color:#000;letter-spacing:0.25px">03/07/2007  18:1</div>
<svg class="a" style="left:4px;top:323px" width="14" height="16"><use href="#i-gif"/></svg>
<div class="t" style="left:20px;top:326px;color:#000;letter-spacing:-0.2px">advban5</div>
<div class="t" style="left:165px;top:326px;color:#000;letter-spacing:-0.2px">gif</div>
<div class="t" style="left:203px;top:326px;color:#000;letter-spacing:0px">1.000</div>
<div class="t" style="left:270px;top:326px;color:#000;letter-spacing:0.25px">01/01/1998  18:4</div>
<svg class="a" style="left:4px;top:340px" width="14" height="16"><use href="#i-gif"/></svg>
<div class="t" style="left:20px;top:343px;color:#000;letter-spacing:-0.2px">advban5</div>
<div class="t" style="left:165px;top:343px;color:#000;letter-spacing:-0.2px">gif</div>
<div class="t" style="left:203px;top:343px;color:#000;letter-spacing:0px">1.000</div>
<div class="t" style="left:270px;top:343px;color:#000;letter-spacing:0.25px">08/03/2004  23:4</div>
<svg class="a" style="left:4px;top:357px" width="14" height="16"><use href="#i-gif"/></svg>
<div class="t" style="left:20px;top:360px;color:#000;letter-spacing:-0.2px">advban5</div>
<div class="t" style="left:165px;top:360px;color:#000;letter-spacing:-0.2px">gif</div>
<div class="t" style="left:203px;top:360px;color:#000;letter-spacing:0px">1.000</div>
<div class="t" style="left:270px;top:360px;color:#000;letter-spacing:0.25px">01/01/1998  18:4</div>
<svg class="a" style="left:4px;top:374px" width="14" height="16"><use href="#i-gif"/></svg>
<div class="t" style="left:20px;top:377px;color:#000;letter-spacing:-0.2px">advban5</div>
<div class="t" style="left:165px;top:377px;color:#000;letter-spacing:-0.2px">gif</div>
<div class="t" style="left:203px;top:377px;color:#000;letter-spacing:0px">1.000</div>
<div class="t" style="left:270px;top:377px;color:#000;letter-spacing:0.25px">01/01/1998  18:4</div>
<svg class="a" style="left:4px;top:391px" width="14" height="16"><use href="#i-gif"/></svg>
<div class="t" style="left:20px;top:394px;color:#000;letter-spacing:-0.2px">advban5</div>
<div class="t" style="left:165px;top:394px;color:#000;letter-spacing:-0.2px">gif</div>
<div class="t" style="left:203px;top:394px;color:#000;letter-spacing:0px">1.000</div>
<div class="t" style="left:270px;top:394px;color:#000;letter-spacing:0.25px">03/17/2004  16:1</div>
<svg class="a" style="left:4px;top:408px" width="14" height="16"><use href="#i-gif"/></svg>
<div class="t" style="left:20px;top:411px;color:#000;letter-spacing:-0.2px">advban5</div>
<div class="t" style="left:165px;top:411px;color:#000;letter-spacing:-0.2px">gif</div>
<div class="t" style="left:203px;top:411px;color:#000;letter-spacing:0px">1.000</div>
<div class="t" style="left:270px;top:411px;color:#000;letter-spacing:0.25px">03/24/2003  22:4</div>
<svg class="a" style="left:4px;top:425px" width="14" height="16"><use href="#i-gif"/></svg>
<div class="t" style="left:20px;top:428px;color:#000;letter-spacing:-0.2px">advban5</div>
<div class="t" style="left:165px;top:428px;color:#000;letter-spacing:-0.2px">gif</div>
<div class="t" style="left:203px;top:428px;color:#000;letter-spacing:0px">1.000</div>
<div class="t" style="left:270px;top:428px;color:#000;letter-spacing:0.25px">09/04/2004  09:3</div>
<svg class="a" style="left:4px;top:442px" width="14" height="16"><use href="#i-gif"/></svg>
<div class="t" style="left:20px;top:445px;color:#000;letter-spacing:-0.2px">advban5</div>
<div class="t" style="left:165px;top:445px;color:#000;letter-spacing:-0.2px">gif</div>
<div class="t" style="left:203px;top:445px;color:#000;letter-spacing:0px">1.000</div>
<div class="t" style="left:270px;top:445px;color:#000;letter-spacing:0.25px">08/05/2004  01:1</div>
<svg class="a" style="left:4px;top:459px" width="14" height="16"><use href="#i-gif"/></svg>
<div class="t" style="left:20px;top:462px;color:#000;letter-spacing:-0.2px">advban5</div>
<div class="t" style="left:165px;top:462px;color:#000;letter-spacing:-0.2px">gif</div>
<div class="t" style="left:203px;top:462px;color:#000;letter-spacing:0px">1.000</div>
<div class="t" style="left:270px;top:462px;color:#000;letter-spacing:0.25px">05/30/2009  13:0</div>
<svg class="a" style="left:4px;top:476px" width="14" height="16"><use href="#i-gif"/></svg>
<div class="t" style="left:20px;top:478px;color:#000;letter-spacing:-0.2px">advban5</div>
<div class="t" style="left:165px;top:478px;color:#000;letter-spacing:-0.2px">gif</div>
<div class="t" style="left:203px;top:478px;color:#000;letter-spacing:0px">1.000</div>
<div class="t" style="left:270px;top:478px;color:#000;letter-spacing:0.25px">03/24/2003  22:4</div>
</div>
<div class="a rb2" style="left:784px;top:38px;width:16px;height:16px;background:#c0c0c0;"></div>
<svg class="a" style="left:784px;top:38px" width="16" height="16" shape-rendering="crispEdges"><path d="M7 6h1v1h1v1h1v1h1v1h-7v-1h1v-1h1v-1h1z" fill="#000"/></svg>
<svg class="a" style="left:784px;top:54px" width="16" height="482" viewBox="784 54 16 482" shape-rendering="crispEdges"><rect x="784" y="54" width="16" height="482" fill="url(#ck)"/></svg>
<div class="a rb2" style="left:784px;top:54px;width:16px;height:152px;background:#c0c0c0;"></div>
<div class="a rb2" style="left:784px;top:520px;width:16px;height:16px;background:#c0c0c0;"></div>
<svg class="a" style="left:784px;top:520px" width="16" height="16" shape-rendering="crispEdges"><path d="M4 6h7v1h-1v1h-1v1h-1v1h-1v-1h-1v-1h-1v-1h-1z" fill="#000"/></svg>
<svg class="a" style="left:0px;top:536px" width="372" height="16" viewBox="0 536 372 16" shape-rendering="crispEdges"><rect x="0" y="536" width="372" height="16" fill="url(#ck)"/></svg>
<div class="a rb2" style="left:0px;top:536px;width:16px;height:16px;background:#c0c0c0;"></div>
<svg class="a" style="left:0;top:536px" width="16" height="16" shape-rendering="crispEdges"><path d="M5 7h1v-1h1v-1h1v-1h1v7h-1v-1h-1v-1h-1v-1h-1z" fill="#000"/></svg>
<div class="a rb2" style="left:16px;top:536px;width:310px;height:16px;background:#c0c0c0;"></div>
<div class="a rb2" style="left:340px;top:536px;width:16px;height:16px;background:#c0c0c0;"></div>
<svg class="a" style="left:340px;top:536px" width="16" height="16" shape-rendering="crispEdges"><path d="M6 4h1v1h1v1h1v1h1v1h-1v1h-1v1h-1v1h-1z" fill="#000"/></svg>
<div class="a" style="left:356px;top:536px;width:16px;height:16px;background:#c0c0c0"></div>
<svg class="a" style="left:428px;top:536px" width="372" height="16" viewBox="428 536 372 16" shape-rendering="crispEdges"><rect x="428" y="536" width="372" height="16" fill="url(#ck)"/></svg>
<div class="a rb2" style="left:428px;top:536px;width:16px;height:16px;background:#c0c0c0;"></div>
<svg class="a" style="left:428px;top:536px" width="16" height="16" shape-rendering="crispEdges"><path d="M5 7h1v-1h1v-1h1v-1h1v7h-1v-1h-1v-1h-1v-1h-1z" fill="#000"/></svg>
<div class="a rb2" style="left:444px;top:536px;width:310px;height:16px;background:#c0c0c0;"></div>
<div class="a rb2" style="left:768px;top:536px;width:16px;height:16px;background:#c0c0c0;"></div>
<svg class="a" style="left:768px;top:536px" width="16" height="16" shape-rendering="crispEdges"><path d="M6 4h1v1h1v1h1v1h1v1h-1v1h-1v1h-1v1h-1z" fill="#000"/></svg>
<div class="a" style="left:784px;top:536px;width:16px;height:16px;background:#c0c0c0"></div>
<div class="a" style="left:0;top:552px;width:800px;height:24px;background:#c0c0c0"></div>
<div class="a sk" style="left:0px;top:554px;width:301px;height:18px"></div>
<div class="a sk" style="left:302px;top:554px;width:99px;height:18px"></div>
<div class="a sk" style="left:402px;top:554px;width:299px;height:18px"></div>
<div class="a sk" style="left:702px;top:554px;width:98px;height:18px"></div>
<div class="t" style="left:3px;top:556px;letter-spacing:-0.1px">C:\Program Files\</div>
<div class="t" style="left:305px;top:556px;">0</div>
<div class="t" style="left:705px;top:556px;">1.853.370</div>
<div class="a" style="left:0;top:574px;width:800px;height:1px;background:#fff"></div>
<svg class="a" style="left:259px;top:212px" width="459" height="319" viewBox="259 212 459 319" shape-rendering="crispEdges"><rect x="259" y="212" width="459" height="319" fill="url(#hD)"/></svg>
<div class="a" style="left:259px;top:212px;width:459px;height:319px;box-shadow:inset -1px -1px #000,inset 1px 1px #c0c0c0,inset -2px -2px #808080,inset 2px 2px #fff,inset 3px 3px #dfdfdf"></div>
<div class="a" style="left:262px;top:215px;width:454px;height:18px;background:linear-gradient(to right,#000080 0%,#000080 30%,#1084d0 100%)"></div>
<svg class="a" style="left:264px;top:216px;" width="16" height="16" shape-rendering="crispEdges"><rect x="7" y="0" width="9" height="1" fill="#000000"/><rect x="6" y="1" width="1" height="1" fill="#000000"/><rect x="7" y="1" width="2" height="1" fill="#d8d8d8"/><rect x="9" y="1" width="5" height="1" fill="#1878d0"/><rect x="14" y="1" width="1" height="1" fill="#d8d8d8"/><rect x="15" y="1" width="1" height="1" fill="#000000"/><rect x="6" y="2" width="1" height="1" fill="#000000"/><rect x="7" y="2" width="1" height="1" fill="#d8d8d8"/><rect x="8" y="2" width="6" height="1" fill="#1878d0"/><rect x="14" y="2" width="1" height="1" fill="#d8d8d8"/><rect x="15" y="2" width="1" height="1" fill="#000000"/><rect x="6" y="3" width="1" height="1" fill="#000000"/><rect x="7" y="3" width="1" height="1" fill="#d8d8d8"/><rect x="8" y="3" width="1" height="1" fill="#1878d0"/><rect x="9" y="3" width="1" height="1" fill="#d8d8d8"/><rect x="10" y="3" width="1" height="1" fill="#1878d0"/><rect x="11" y="3" width="1" height="1" fill="#d8d8d8"/><rect x="12" y="3" width="2" height="1" fill="#1878d0"/><rect x="14" y="3" width="1" height="1" fill="#d8d8d8"/><rect x="15" y="3" width="1" height="1" fill="#000000"/><rect x="6" y="4" width="1" height="1" fill="#000000"/><rect x="7" y="4" width="2" height="1" fill="#d8d8d8"/><rect x="9" y="4" width="1" height="1" fill="#1878d0"/><rect x="10" y="4" width="2" height="1" fill="#d8d8d8"/><rect x="12" y="4" width="1" height="1" fill="#1878d0"/><rect x="13" y="4" width="2" height="1" fill="#d8d8d8"/><rect x="15" y="4" width="1" height="1" fill="#000000"/><rect x="6" y="5" width="1" height="1" fill="#000000"/><rect x="7" y="5" width="8" height="1" fill="#d8d8d8"/><rect x="15" y="5" width="1" height="1" fill="#000000"/><rect x="1" y="6" width="6" height="1" fill="#000000"/><rect x="7" y="6" width="8" height="1" fill="#d8d8d8"/><rect x="15" y="6" width="1" height="1" fill="#000000"/><rect x="0" y="7" width="1" height="1" fill="#000000"/><rect x="1" y="7" width="9" height="1" fill="#d8d8d8"/><rect x="10" y="7" width="2" height="1" fill="#1878d0"/><rect x="12" y="7" width="3" height="1" fill="#d8d8d8"/><rect x="15" y="7" width="1" height="1" fill="#000000"/><rect x="0" y="8" width="1" height="1" fill="#000000"/><rect x="1" y="8" width="5" height="1" fill="#d8d8d8"/><rect x="6" y="8" width="2" height="1" fill="#808080"/><rect x="8" y="8" width="1" height="1" fill="#d8d8d8"/><rect x="9" y="8" width="2" height="1" fill="#000000"/><rect x="11" y="8" width="4" height="1" fill="#d8d8d8"/><rect x="15" y="8" width="1" height="1" fill="#000000"/><rect x="0" y="9" width="1" height="1" fill="#000000"/><rect x="1" y="9" width="5" height="1" fill="#d8d8d8"/><rect x="6" y="9" width="2" height="1" fill="#808080"/><rect x="8" y="9" width="1" height="1" fill="#d8d8d8"/><rect x="9" y="9" width="2" height="1" fill="#000000"/><rect x="11" y="9" width="1" height="1" fill="#d8d8d8"/><rect x="12" y="9" width="2" height="1" fill="#1878d0"/><rect x="14" y="9" width="1" height="1" fill="#d8d8d8"/><rect x="15" y="9" width="1" height="1" fill="#000000"/><rect x="0" y="10" width="1" height="1" fill="#000000"/><rect x="1" y="10" width="12" height="1" fill="#d8d8d8"/><rect x="13" y="10" width="1" height="1" fill="#808080"/><rect x="14" y="10" width="1" height="1" fill="#d8d8d8"/><rect x="15" y="10" width="1" height="1" fill="#000000"/><rect x="0" y="11" width="1" height="1" fill="#000000"/><rect x="1" y="11" width="4" height="1" fill="#d8d8d8"/><rect x="5" y="11" width="3" height="1" fill="#1878d0"/><rect x="8" y="11" width="5" height="1" fill="#d8d8d8"/><rect x="13" y="11" width="1" height="1" fill="#808080"/><rect x="14" y="11" width="1" height="1" fill="#d8d8d8"/><rect x="15" y="11" width="1" height="1" fill="#000000"/><rect x="0" y="12" width="1" height="1" fill="#000000"/><rect x="1" y="12" width="2" height="1" fill="#d8d8d8"/><rect x="3" y="12" width="1" height="1" fill="#1878d0"/><rect x="4" y="12" width="6" height="1" fill="#000000"/><rect x="10" y="12" width="2" height="1" fill="#1878d0"/><rect x="12" y="12" width="1" height="1" fill="#d8d8d8"/><rect x="13" y="12" width="1" height="1" fill="#808080"/><rect x="14" y="12" width="1" height="1" fill="#d8d8d8"/><rect x="15" y="12" width="1" height="1" fill="#000000"/><rect x="0" y="13" width="1" height="1" fill="#000000"/><rect x="1" y="13" width="3" height="1" fill="#d8d8d8"/><rect x="4" y="13" width="4" height="1" fill="#ffffff"/><rect x="8" y="13" width="5" height="1" fill="#d8d8d8"/><rect x="13" y="13" width="1" height="1" fill="#808080"/><rect x="14" y="13" width="1" height="1" fill="#d8d8d8"/><rect x="15" y="13" width="1" height="1" fill="#000000"/><rect x="0" y="14" width="1" height="1" fill="#000000"/><rect x="1" y="14" width="14" height="1" fill="#1878d0"/><rect x="15" y="14" width="1" height="1" fill="#000000"/><rect x="0" y="15" width="16" height="1" fill="#000000"/></svg>
<div class="t" style="left:282px;top:217px;font-weight:bold;font-size:12px;line-height:15px;height:15px;color:#fff;letter-spacing:-0.15px">Disk Order - Compress / DeCompress</div>
<div class="a rb2" style="left:697px;top:217px;width:16px;height:14px;background:#c0c0c0;"></div>
<svg class="a" style="left:697px;top:217px" width="16" height="14" shape-rendering="crispEdges"><path d="M4 3h2v1h1v1h2v-1h1v-1h2v1h-1v1h-1v1h-1v1h1v1h1v1h1v1h-2v-1h-1v-1h-2v1h-1v1h-2v-1h1v-1h1v-1h1v-1h-1v-1h-1v-1h-1z" fill="#000"/></svg>
<div class="a" style="left:271px;top:247px;width:431px;height:237px;border:1px solid #808080;box-shadow:1px 1px #fff,inset 1px 1px #fff"></div>
<div class="a" style="left:279px;top:241px;width:164px;height:15px;background:#c0c0c0"></div>
<div class="t" style="left:280px;top:242px;letter-spacing:-0.12px">Compress / Decompress / Repair</div>
<div class="a" style="left:292px;top:260px;width:109px;height:14px;background:#c0c0c0"></div>
<div class="t" style="left:296px;top:261px;letter-spacing:-0.22px">Destination directory:</div>
<div class="a" style="left:292px;top:276px;width:394px;height:15px;background:#c0c0c0;box-shadow:inset 0 1px #a0a0a0"></div>
<div class="t" style="left:294px;top:278px;letter-spacing:-0.1px">C:\Program Files\</div>
<div class="a" style="left:292px;top:297px;width:394px;height:19px;background:#f8f8f8;box-shadow:inset 1px 1px #000,inset -1px -1px #dfdfdf"></div>
<div class="t" style="left:295px;top:300px;letter-spacing:-0.22px">probe.zip</div>
<div class="a" style="left:291px;top:326px;width:395px;height:34px;border:1px solid #808080;box-shadow:1px 1px #fff,inset 1px 1px #fff"></div>
<div class="a" style="left:299px;top:320px;width:123px;height:14px;background:#c0c0c0"></div>
<div class="t" style="left:300px;top:320px;letter-spacing:-0.22px">De / Compression utilities</div>
<div class="a" style="left:329px;top:338px;width:38px;height:15px;background:#c0c0c0"></div>
<svg class="a" style="left:330px;top:339px;" width="12" height="12" shape-rendering="crispEdges"><rect x="4" y="0" width="4" height="1" fill="#808080"/><rect x="2" y="1" width="2" height="1" fill="#808080"/><rect x="4" y="1" width="4" height="1" fill="#000000"/><rect x="8" y="1" width="2" height="1" fill="#808080"/><rect x="1" y="2" width="1" height="1" fill="#808080"/><rect x="2" y="2" width="2" height="1" fill="#000000"/><rect x="4" y="2" width="4" height="1" fill="#ffffff"/><rect x="8" y="2" width="2" height="1" fill="#000000"/><rect x="10" y="2" width="1" height="1" fill="#dfdfdf"/><rect x="1" y="3" width="1" height="1" fill="#808080"/><rect x="2" y="3" width="1" height="1" fill="#000000"/><rect x="3" y="3" width="7" height="1" fill="#ffffff"/><rect x="10" y="3" width="1" height="1" fill="#dfdfdf"/><rect x="11" y="3" width="1" height="1" fill="#ffffff"/><rect x="0" y="4" width="1" height="1" fill="#808080"/><rect x="1" y="4" width="1" height="1" fill="#000000"/><rect x="2" y="4" width="3" height="1" fill="#ffffff"/><rect x="5" y="4" width="2" height="1" fill="#000000"/><rect x="7" y="4" width="3" height="1" fill="#ffffff"/><rect x="10" y="4" width="1" height="1" fill="#dfdfdf"/><rect x="11" y="4" width="1" height="1" fill="#ffffff"/><rect x="0" y="5" width="1" height="1" fill="#808080"/><rect x="1" y="5" width="1" height="1" fill="#000000"/><rect x="2" y="5" width="2" height="1" fill="#ffffff"/><rect x="4" y="5" width="4" height="1" fill="#000000"/><rect x="8" y="5" width="2" height="1" fill="#ffffff"/><rect x="10" y="5" width="1" height="1" fill="#dfdfdf"/><rect x="11" y="5" width="1" height="1" fill="#ffffff"/><rect x="0" y="6" width="1" height="1" fill="#808080"/><rect x="1" y="6" width="1" height="1" fill="#000000"/><rect x="2" y="6" width="2" height="1" fill="#ffffff"/><rect x="4" y="6" width="4" height="1" fill="#000000"/><rect x="8" y="6" width="2" height="1" fill="#ffffff"/><rect x="10" y="6" width="1" height="1" fill="#dfdfdf"/><rect x="11" y="6" width="1" height="1" fill="#ffffff"/><rect x="0" y="7" width="1" height="1" fill="#808080"/><rect x="1" y="7" width="1" height="1" fill="#000000"/><rect x="2" y="7" width="3" height="1" fill="#ffffff"/><rect x="5" y="7" width="2" height="1" fill="#000000"/><rect x="7" y="7" width="3" height="1" fill="#ffffff"/><rect x="10" y="7" width="1" height="1" fill="#dfdfdf"/><rect x="11" y="7" width="1" height="1" fill="#ffffff"/><rect x="1" y="8" width="1" height="1" fill="#808080"/><rect x="2" y="8" width="1" height="1" fill="#000000"/><rect x="3" y="8" width="7" height="1" fill="#ffffff"/><rect x="10" y="8" width="1" height="1" fill="#dfdfdf"/><rect x="11" y="8" width="1" height="1" fill="#ffffff"/><rect x="1" y="9" width="1" height="1" fill="#808080"/><rect x="2" y="9" width="2" height="1" fill="#dfdfdf"/><rect x="4" y="9" width="4" height="1" fill="#ffffff"/><rect x="8" y="9" width="2" height="1" fill="#dfdfdf"/><rect x="10" y="9" width="1" height="1" fill="#ffffff"/><rect x="2" y="10" width="2" height="1" fill="#ffffff"/><rect x="4" y="10" width="4" height="1" fill="#dfdfdf"/><rect x="8" y="10" width="2" height="1" fill="#ffffff"/><rect x="4" y="11" width="4" height="1" fill="#ffffff"/></svg>
<div class="t" style="left:346px;top:338px;letter-spacing:-0.22px">ZIP</div>
<div class="a" style="left:435px;top:338px;width:46px;height:15px;background:#c0c0c0"></div>
<svg class="a" style="left:436px;top:339px;" width="12" height="12" shape-rendering="crispEdges"><rect x="4" y="0" width="4" height="1" fill="#808080"/><rect x="2" y="1" width="2" height="1" fill="#808080"/><rect x="4" y="1" width="4" height="1" fill="#000000"/><rect x="8" y="1" width="2" height="1" fill="#808080"/><rect x="1" y="2" width="1" height="1" fill="#808080"/><rect x="2" y="2" width="2" height="1" fill="#000000"/><rect x="4" y="2" width="4" height="1" fill="#ffffff"/><rect x="8" y="2" width="2" height="1" fill="#000000"/><rect x="10" y="2" width="1" height="1" fill="#dfdfdf"/><rect x="1" y="3" width="1" height="1" fill="#808080"/><rect x="2" y="3" width="1" height="1" fill="#000000"/><rect x="3" y="3" width="7" height="1" fill="#ffffff"/><rect x="10" y="3" width="1" height="1" fill="#dfdfdf"/><rect x="11" y="3" width="1" height="1" fill="#ffffff"/><rect x="0" y="4" width="1" height="1" fill="#808080"/><rect x="1" y="4" width="1" height="1" fill="#000000"/><rect x="2" y="4" width="8" height="1" fill="#ffffff"/><rect x="10" y="4" width="1" height="1" fill="#dfdfdf"/><rect x="11" y="4" width="1" height="1" fill="#ffffff"/><rect x="0" y="5" width="1" height="1" fill="#808080"/><rect x="1" y="5" width="1" height="1" fill="#000000"/><rect x="2" y="5" width="8" height="1" fill="#ffffff"/><rect x="10" y="5" width="1" height="1" fill="#dfdfdf"/><rect x="11" y="5" width="1" height="1" fill="#ffffff"/><rect x="0" y="6" width="1" height="1" fill="#808080"/><rect x="1" y="6" width="1" height="1" fill="#000000"/><rect x="2" y="6" width="8" height="1" fill="#ffffff"/><rect x="10" y="6" width="1" height="1" fill="#dfdfdf"/><rect x="11" y="6" width="1" height="1" fill="#ffffff"/><rect x="0" y="7" width="1" height="1" fill="#808080"/><rect x="1" y="7" width="1" height="1" fill="#000000"/><rect x="2" y="7" width="8" height="1" fill="#ffffff"/><rect x="10" y="7" width="1" height="1" fill="#dfdfdf"/><rect x="11" y="7" width="1" height="1" fill="#ffffff"/><rect x="1" y="8" width="1" height="1" fill="#808080"/><rect x="2" y="8" width="1" height="1" fill="#000000"/><rect x="3" y="8" width="7" height="1" fill="#ffffff"/><rect x="10" y="8" width="1" height="1" fill="#dfdfdf"/><rect x="11" y="8" width="1" height="1" fill="#ffffff"/><rect x="1" y="9" width="1" height="1" fill="#808080"/><rect x="2" y="9" width="2" height="1" fill="#dfdfdf"/><rect x="4" y="9" width="4" height="1" fill="#ffffff"/><rect x="8" y="9" width="2" height="1" fill="#dfdfdf"/><rect x="10" y="9" width="1" height="1" fill="#ffffff"/><rect x="2" y="10" width="2" height="1" fill="#ffffff"/><rect x="4" y="10" width="4" height="1" fill="#dfdfdf"/><rect x="8" y="10" width="2" height="1" fill="#ffffff"/><rect x="4" y="11" width="4" height="1" fill="#ffffff"/></svg>
<div class="t" style="left:453px;top:338px;letter-spacing:-0.22px">GZIP</div>
<div class="a" style="left:529px;top:338px;width:147px;height:15px;background:#c0c0c0"></div>
<svg class="a" style="left:530px;top:339px;" width="12" height="12" shape-rendering="crispEdges"><rect x="4" y="0" width="4" height="1" fill="#808080"/><rect x="2" y="1" width="2" height="1" fill="#808080"/><rect x="4" y="1" width="4" height="1" fill="#000000"/><rect x="8" y="1" width="2" height="1" fill="#808080"/><rect x="1" y="2" width="1" height="1" fill="#808080"/><rect x="2" y="2" width="2" height="1" fill="#000000"/><rect x="4" y="2" width="4" height="1" fill="#ffffff"/><rect x="8" y="2" width="2" height="1" fill="#000000"/><rect x="10" y="2" width="1" height="1" fill="#dfdfdf"/><rect x="1" y="3" width="1" height="1" fill="#808080"/><rect x="2" y="3" width="1" height="1" fill="#000000"/><rect x="3" y="3" width="7" height="1" fill="#ffffff"/><rect x="10" y="3" width="1" height="1" fill="#dfdfdf"/><rect x="11" y="3" width="1" height="1" fill="#ffffff"/><rect x="0" y="4" width="1" height="1" fill="#808080"/><rect x="1" y="4" width="1" height="1" fill="#000000"/><rect x="2" y="4" width="8" height="1" fill="#ffffff"/><rect x="10" y="4" width="1" height="1" fill="#dfdfdf"/><rect x="11" y="4" width="1" height="1" fill="#ffffff"/><rect x="0" y="5" width="1" height="1" fill="#808080"/><rect x="1" y="5" width="1" height="1" fill="#000000"/><rect x="2" y="5" width="8" height="1" fill="#ffffff"/><rect x="10" y="5" width="1" height="1" fill="#dfdfdf"/><rect x="11" y="5" width="1" height="1" fill="#ffffff"/><rect x="0" y="6" width="1" height="1" fill="#808080"/><rect x="1" y="6" width="1" height="1" fill="#000000"/><rect x="2" y="6" width="8" height="1" fill="#ffffff"/><rect x="10" y="6" width="1" height="1" fill="#dfdfdf"/><rect x="11" y="6" width="1" height="1" fill="#ffffff"/><rect x="0" y="7" width="1" height="1" fill="#808080"/><rect x="1" y="7" width="1" height="1" fill="#000000"/><rect x="2" y="7" width="8" height="1" fill="#ffffff"/><rect x="10" y="7" width="1" height="1" fill="#dfdfdf"/><rect x="11" y="7" width="1" height="1" fill="#ffffff"/><rect x="1" y="8" width="1" height="1" fill="#808080"/><rect x="2" y="8" width="1" height="1" fill="#000000"/><rect x="3" y="8" width="7" height="1" fill="#ffffff"/><rect x="10" y="8" width="1" height="1" fill="#dfdfdf"/><rect x="11" y="8" width="1" height="1" fill="#ffffff"/><rect x="1" y="9" width="1" height="1" fill="#808080"/><rect x="2" y="9" width="2" height="1" fill="#dfdfdf"/><rect x="4" y="9" width="4" height="1" fill="#ffffff"/><rect x="8" y="9" width="2" height="1" fill="#dfdfdf"/><rect x="10" y="9" width="1" height="1" fill="#ffffff"/><rect x="2" y="10" width="2" height="1" fill="#ffffff"/><rect x="4" y="10" width="4" height="1" fill="#dfdfdf"/><rect x="8" y="10" width="2" height="1" fill="#ffffff"/><rect x="4" y="11" width="4" height="1" fill="#ffffff"/></svg>
<div class="t" style="left:546px;top:338px;letter-spacing:-0.22px">ARJ (decompression only)</div>
<div class="a" style="left:291px;top:372px;width:395px;height:101px;border:1px solid #808080;box-shadow:1px 1px #fff,inset 1px 1px #fff"></div>
<div class="a" style="left:299px;top:368px;width:39px;height:15px;background:#c0c0c0"></div>
<div class="t" style="left:300px;top:368px;letter-spacing:-0.22px">Options</div>
<div class="a" style="left:306px;top:387px;width:82px;height:15px;background:#c0c0c0"></div>
<div class="a" style="left:306px;top:388px;width:13px;height:13px;background:#fff;box-shadow:inset 1px 1px #808080,inset -1px -1px #fff,inset 2px 2px #000,inset -2px -2px #dfdfdf"></div>
<div class="t" style="left:325px;top:388px;letter-spacing:-0.22px">Test archive</div>
<div class="a" style="left:306px;top:410px;width:95px;height:15px;background:#c0c0c0"></div>
<div class="a" style="left:306px;top:411px;width:13px;height:13px;background:#fff;box-shadow:inset 1px 1px #808080,inset -1px -1px #fff,inset 2px 2px #000,inset -2px -2px #dfdfdf"></div>
<div class="t" style="left:325px;top:411px;letter-spacing:-0.22px">Repair archive</div>
<div class="a" style="left:504px;top:387px;width:131px;height:15px;background:#c0c0c0"></div>
<div class="a" style="left:504px;top:388px;width:13px;height:13px;background:#fff;box-shadow:inset 1px 1px #808080,inset -1px -1px #fff,inset 2px 2px #000,inset -2px -2px #dfdfdf"></div>
<svg class="a" style="left:507px;top:391px;" width="7" height="7" shape-rendering="crispEdges"><rect x="6" y="0" width="1" height="1" fill="#000000"/><rect x="5" y="1" width="2" height="1" fill="#000000"/><rect x="0" y="2" width="1" height="1" fill="#000000"/><rect x="4" y="2" width="3" height="1" fill="#000000"/><rect x="0" y="3" width="2" height="1" fill="#000000"/><rect x="3" y="3" width="3" height="1" fill="#000000"/><rect x="0" y="4" width="5" height="1" fill="#000000"/><rect x="1" y="5" width="3" height="1" fill="#000000"/><rect x="2" y="6" width="1" height="1" fill="#000000"/></svg>
<div class="t" style="left:522px;top:388px;letter-spacing:-0.22px">Recurse subdirectories</div>
<div class="a" style="left:504px;top:410px;width:121px;height:15px;background:#c0c0c0"></div>
<div class="a" style="left:504px;top:411px;width:13px;height:13px;background:#fff;box-shadow:inset 1px 1px #808080,inset -1px -1px #fff,inset 2px 2px #000,inset -2px -2px #dfdfdf"></div>
<div class="t" style="left:522px;top:411px;letter-spacing:-0.22px">Include system files</div>
<div class="a" style="left:324px;top:432px;width:120px;height:14px;background:#c0c0c0"></div>
<svg class="a" style="left:325px;top:433px;" width="12" height="12" shape-rendering="crispEdges"><rect x="4" y="0" width="4" height="1" fill="#808080"/><rect x="2" y="1" width="2" height="1" fill="#808080"/><rect x="4" y="1" width="4" height="1" fill="#000000"/><rect x="8" y="1" width="2" height="1" fill="#808080"/><rect x="1" y="2" width="1" height="1" fill="#808080"/><rect x="2" y="2" width="2" height="1" fill="#000000"/><rect x="4" y="2" width="4" height="1" fill="#c0c0c0"/><rect x="8" y="2" width="2" height="1" fill="#000000"/><rect x="10" y="2" width="1" height="1" fill="#dfdfdf"/><rect x="1" y="3" width="1" height="1" fill="#808080"/><rect x="2" y="3" width="1" height="1" fill="#000000"/><rect x="3" y="3" width="7" height="1" fill="#c0c0c0"/><rect x="10" y="3" width="1" height="1" fill="#dfdfdf"/><rect x="11" y="3" width="1" height="1" fill="#ffffff"/><rect x="0" y="4" width="1" height="1" fill="#808080"/><rect x="1" y="4" width="1" height="1" fill="#000000"/><rect x="2" y="4" width="3" height="1" fill="#c0c0c0"/><rect x="5" y="4" width="2" height="1" fill="#808080"/><rect x="7" y="4" width="3" height="1" fill="#c0c0c0"/><rect x="10" y="4" width="1" height="1" fill="#dfdfdf"/><rect x="11" y="4" width="1" height="1" fill="#ffffff"/><rect x="0" y="5" width="1" height="1" fill="#808080"/><rect x="1" y="5" width="1" height="1" fill="#000000"/><rect x="2" y="5" width="2" height="1" fill="#c0c0c0"/><rect x="4" y="5" width="4" height="1" fill="#808080"/><rect x="8" y="5" width="2" height="1" fill="#c0c0c0"/><rect x="10" y="5" width="1" height="1" fill="#dfdfdf"/><rect x="11" y="5" width="1" height="1" fill="#ffffff"/><rect x="0" y="6" width="1" height="1" fill="#808080"/><rect x="1" y="6" width="1" height="1" fill="#000000"/><rect x="2" y="6" width="2" height="1" fill="#c0c0c0"/><rect x="4" y="6" width="4" height="1" fill="#808080"/><rect x="8" y="6" width="2" height="1" fill="#c0c0c0"/><rect x="10" y="6" width="1" height="1" fill="#dfdfdf"/><rect x="11" y="6" width="1" height="1" fill="#ffffff"/><rect x="0" y="7" width="1" height="1" fill="#808080"/><rect x="1" y="7" width="1" height="1" fill="#000000"/><rect x="2" y="7" width="3" height="1" fill="#c0c0c0"/><rect x="5" y="7" width="2" height="1" fill="#808080"/><rect x="7" y="7" width="3" height="1" fill="#c0c0c0"/><rect x="10" y="7" width="1" height="1" fill="#dfdfdf"/><rect x="11" y="7" width="1" height="1" fill="#ffffff"/><rect x="1" y="8" width="1" height="1" fill="#808080"/><rect x="2" y="8" width="1" height="1" fill="#000000"/><rect x="3" y="8" width="7" height="1" fill="#c0c0c0"/><rect x="10" y="8" width="1" height="1" fill="#dfdfdf"/><rect x="11" y="8" width="1" height="1" fill="#ffffff"/><rect x="1" y="9" width="1" height="1" fill="#808080"/><rect x="2" y="9" width="2" height="1" fill="#dfdfdf"/><rect x="4" y="9" width="4" height="1" fill="#c0c0c0"/><rect x="8" y="9" width="2" height="1" fill="#dfdfdf"/><rect x="10" y="9" width="1" height="1" fill="#ffffff"/><rect x="2" y="10" width="2" height="1" fill="#ffffff"/><rect x="4" y="10" width="4" height="1" fill="#dfdfdf"/><rect x="8" y="10" width="2" height="1" fill="#ffffff"/><rect x="4" y="11" width="4" height="1" fill="#ffffff"/></svg>
<div class="t" style="left:342px;top:432px;color:#808080;text-shadow:1px 1px #fff;letter-spacing:-0.22px">Repair method - Soft</div>
<div class="a" style="left:324px;top:451px;width:125px;height:14px;background:#c0c0c0"></div>
<svg class="a" style="left:325px;top:452px;" width="12" height="12" shape-rendering="crispEdges"><rect x="4" y="0" width="4" height="1" fill="#808080"/><rect x="2" y="1" width="2" height="1" fill="#808080"/><rect x="4" y="1" width="4" height="1" fill="#000000"/><rect x="8" y="1" width="2" height="1" fill="#808080"/><rect x="1" y="2" width="1" height="1" fill="#808080"/><rect x="2" y="2" width="2" height="1" fill="#000000"/><rect x="4" y="2" width="4" height="1" fill="#c0c0c0"/><rect x="8" y="2" width="2" height="1" fill="#000000"/><rect x="10" y="2" width="1" height="1" fill="#dfdfdf"/><rect x="1" y="3" width="1" height="1" fill="#808080"/><rect x="2" y="3" width="1" height="1" fill="#000000"/><rect x="3" y="3" width="7" height="1" fill="#c0c0c0"/><rect x="10" y="3" width="1" height="1" fill="#dfdfdf"/><rect x="11" y="3" width="1" height="1" fill="#ffffff"/><rect x="0" y="4" width="1" height="1" fill="#808080"/><rect x="1" y="4" width="1" height="1" fill="#000000"/><rect x="2" y="4" width="8" height="1" fill="#c0c0c0"/><rect x="10" y="4" width="1" height="1" fill="#dfdfdf"/><rect x="11" y="4" width="1" height="1" fill="#ffffff"/><rect x="0" y="5" width="1" height="1" fill="#808080"/><rect x="1" y="5" width="1" height="1" fill="#000000"/><rect x="2" y="5" width="8" height="1" fill="#c0c0c0"/><rect x="10" y="5" width="1" height="1" fill="#dfdfdf"/><rect x="11" y="5" width="1" height="1" fill="#ffffff"/><rect x="0" y="6" width="1" height="1" fill="#808080"/><rect x="1" y="6" width="1" height="1" fill="#000000"/><rect x="2" y="6" width="8" height="1" fill="#c0c0c0"/><rect x="10" y="6" width="1" height="1" fill="#dfdfdf"/><rect x="11" y="6" width="1" height="1" fill="#ffffff"/><rect x="0" y="7" width="1" height="1" fill="#808080"/><rect x="1" y="7" width="1" height="1" fill="#000000"/><rect x="2" y="7" width="8" height="1" fill="#c0c0c0"/><rect x="10" y="7" width="1" height="1" fill="#dfdfdf"/><rect x="11" y="7" width="1" height="1" fill="#ffffff"/><rect x="1" y="8" width="1" height="1" fill="#808080"/><rect x="2" y="8" width="1" height="1" fill="#000000"/><rect x="3" y="8" width="7" height="1" fill="#c0c0c0"/><rect x="10" y="8" width="1" height="1" fill="#dfdfdf"/><rect x="11" y="8" width="1" height="1" fill="#ffffff"/><rect x="1" y="9" width="1" height="1" fill="#808080"/><rect x="2" y="9" width="2" height="1" fill="#dfdfdf"/><rect x="4" y="9" width="4" height="1" fill="#c0c0c0"/><rect x="8" y="9" width="2" height="1" fill="#dfdfdf"/><rect x="10" y="9" width="1" height="1" fill="#ffffff"/><rect x="2" y="10" width="2" height="1" fill="#ffffff"/><rect x="4" y="10" width="4" height="1" fill="#dfdfdf"/><rect x="8" y="10" width="2" height="1" fill="#ffffff"/><rect x="4" y="11" width="4" height="1" fill="#ffffff"/></svg>
<div class="t" style="left:342px;top:451px;color:#808080;text-shadow:1px 1px #fff;letter-spacing:-0.22px">Repair method - Hard</div>
<div class="a" style="left:505px;top:432px;width:52px;height:13px;background:#c0c0c0"></div>
<div class="t" style="left:506px;top:432px;letter-spacing:-0.22px">Password</div>
<div class="a" style="left:505px;top:448px;width:134px;height:18px;background:#f8f8f8;box-shadow:inset 1px 1px #000,inset -1px -1px #dfdfdf"></div>
<div class="a" style="left:330px;top:494px;width:93px;height:23px;background:#000"></div>
<div class="a rb2" style="left:331px;top:495px;width:91px;height:21px;background:#c0c0c0;"></div>
<div class="t" style="left:369px;top:498px;">OK</div>
<div class="a rb2" style="left:440px;top:494px;width:93px;height:23px;background:#c0c0c0;"></div>
<div class="t" style="left:469px;top:498px;">Cancel</div>
<div class="a rb2" style="left:550px;top:494px;width:93px;height:23px;background:#c0c0c0;"></div>
<div class="t" style="left:585px;top:498px;">Help</div></body></html>
